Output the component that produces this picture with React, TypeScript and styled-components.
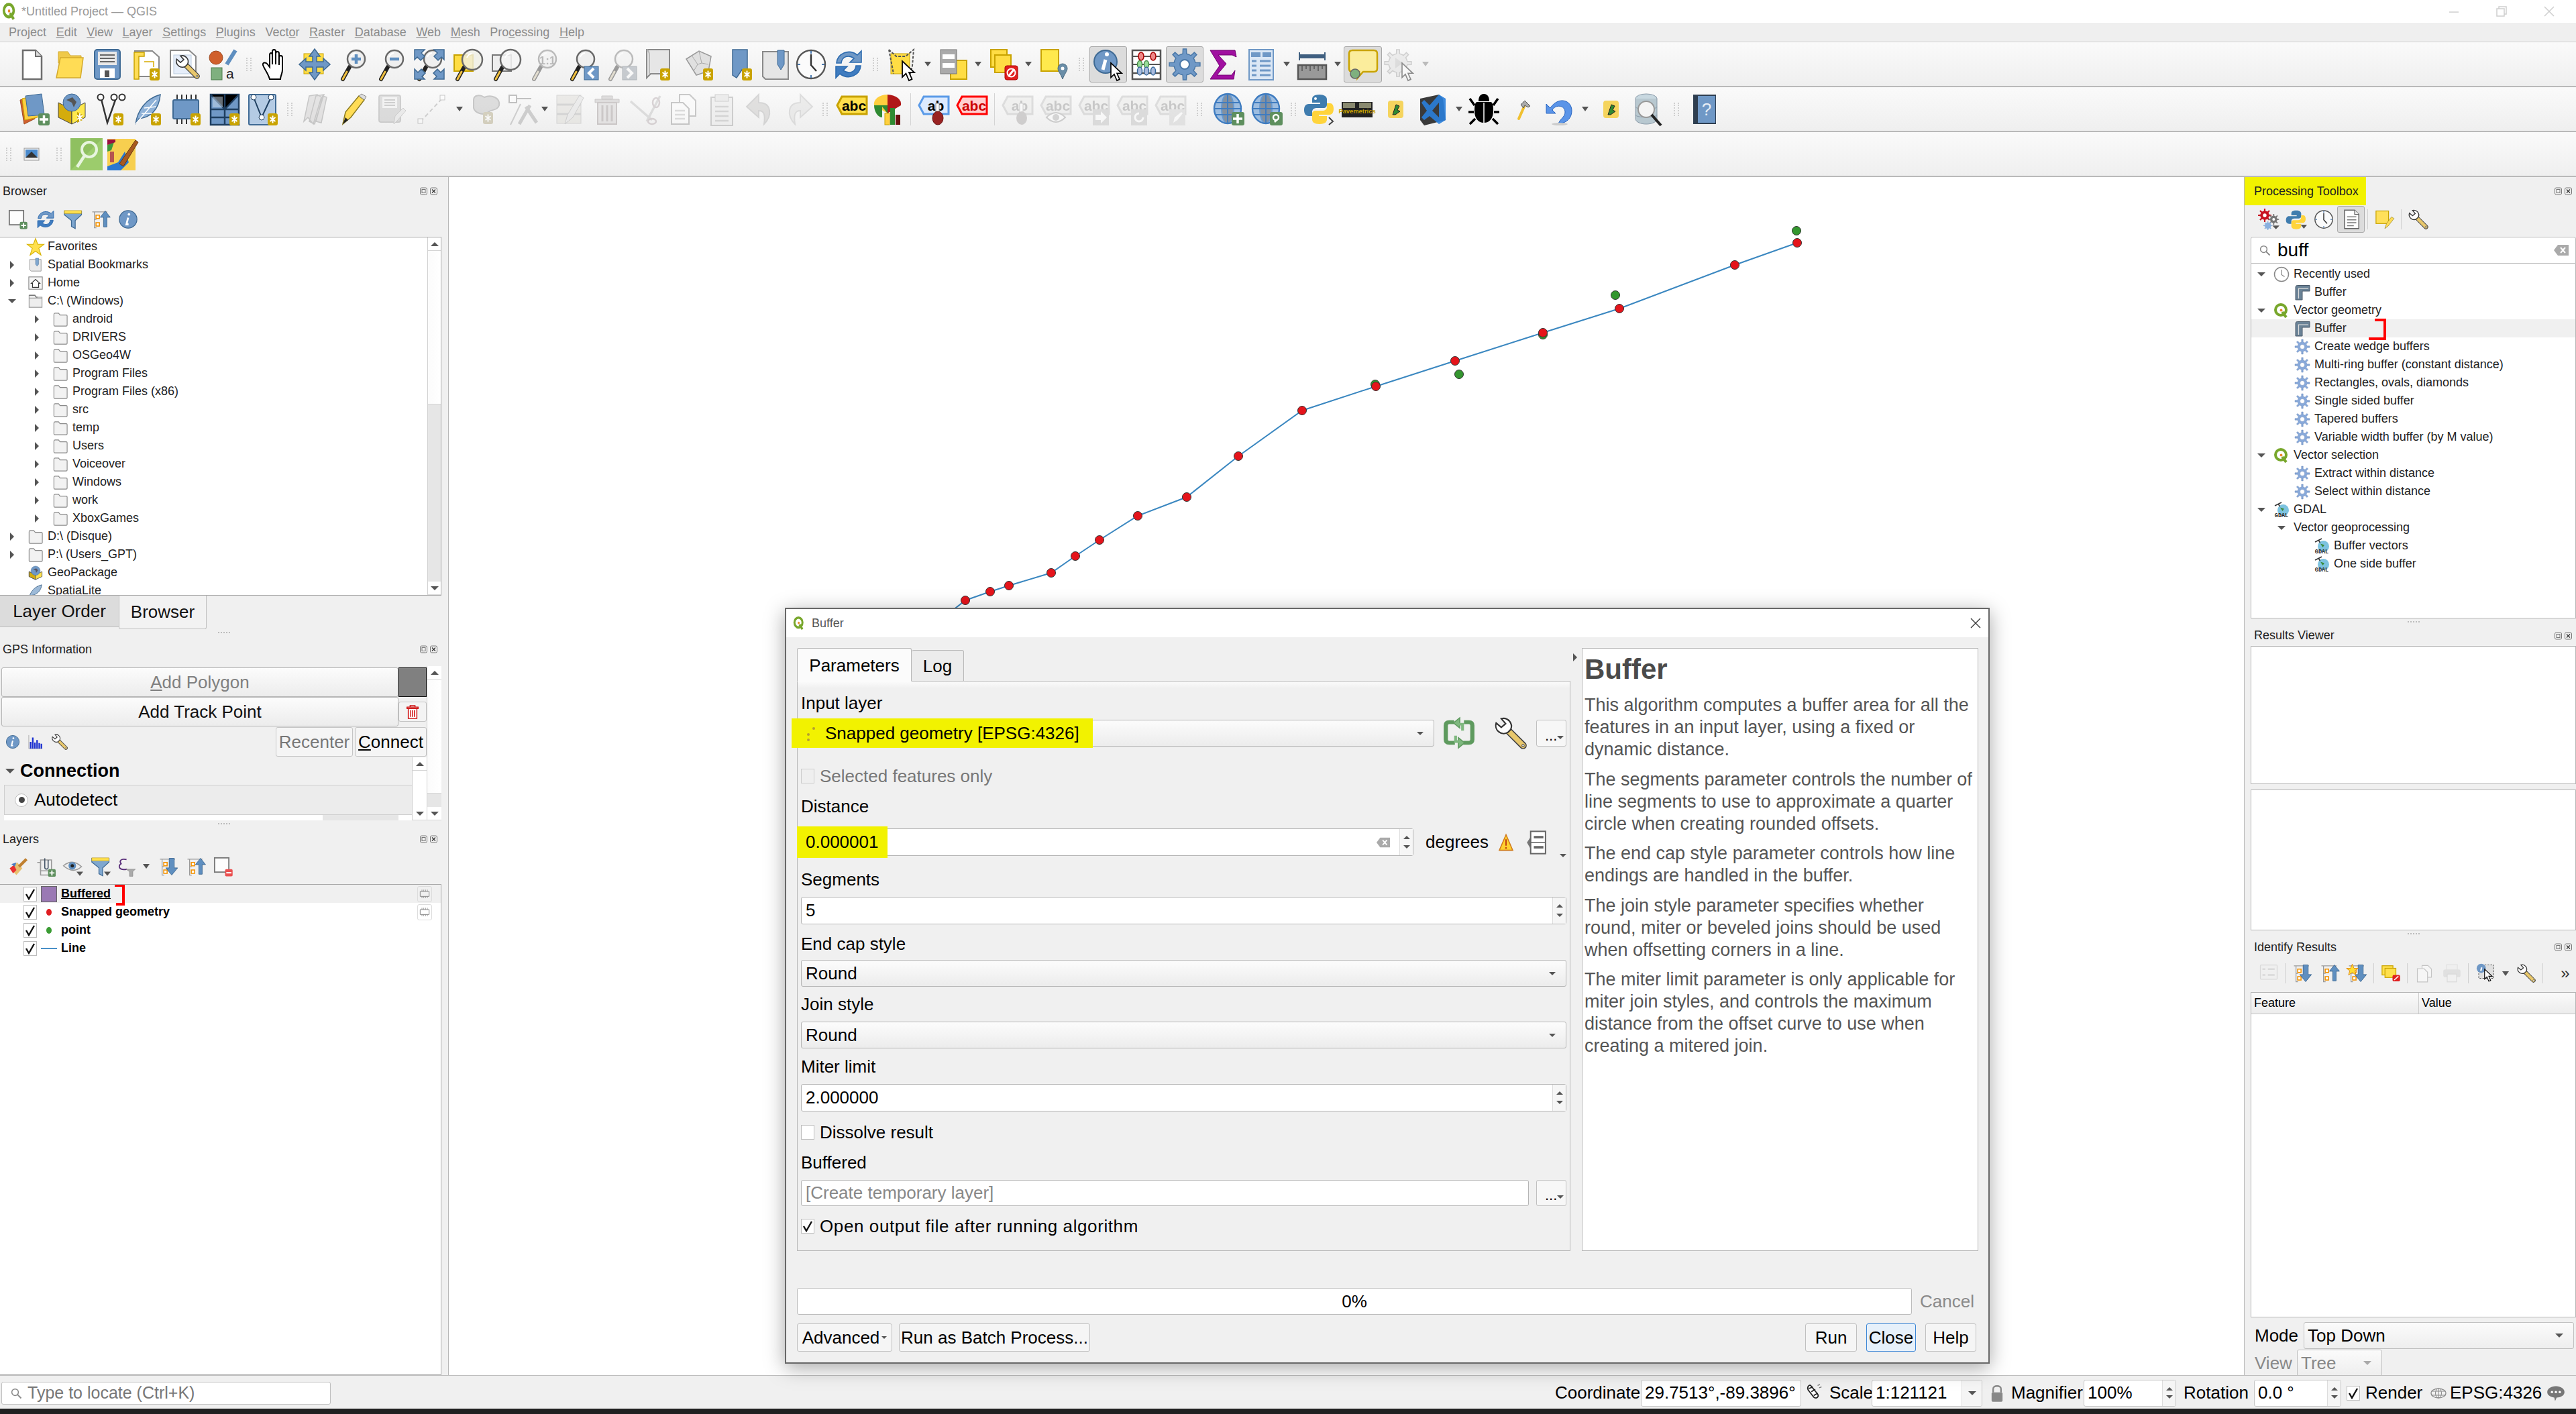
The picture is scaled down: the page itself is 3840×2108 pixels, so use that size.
import React from 'react';
import styled, { createGlobalStyle } from 'styled-components';

const Global = createGlobalStyle`
  html, body { margin: 0; padding: 0; background: #f0f0f0; overflow: hidden; }
  * { box-sizing: border-box; }
  body { font-family: "Liberation Sans", Arial, sans-serif; color: #000; }
`;

const gear = (cx: number, cy: number, r1: number, r2: number, n: number) => {
  let d = '';
  const st = (Math.PI * 2) / n;
  for (let i = 0; i < n; i++) {
    const a = i * st;
    const pts = [
      [a - st * 0.5, r1], [a - st * 0.22, r1], [a - st * 0.14, r2], [a + st * 0.14, r2], [a + st * 0.22, r1],
    ];
    pts.forEach(([t, r], j) => {
      d += `${i === 0 && j === 0 ? 'M' : 'L'}${(cx + Math.cos(t) * r).toFixed(1)} ${(cy + Math.sin(t) * r).toFixed(1)}`;
    });
  }
  return d + 'Z';
};

const Badge = ({ x = 31, y = 30 }: { x?: number; y?: number }) => (
  <g transform={`translate(${x} ${y})`}>
    <rect width="15" height="18" rx="3" fill="#c9a300" />
    <path d="M7.5 3.5v11M3.5 6l8 6M11.5 6l-8 6" stroke="#fff" strokeWidth="2" />
  </g>
);
const Lens = ({ fill = '#efefef', x = 29, y = 16, r = 13 }: { fill?: string; x?: number; y?: number; r?: number }) => (
  <>
    <path d="M9 46L19 28" stroke="#222" strokeWidth="6" strokeLinecap="round" />
    <path d="M9 46L15 35" stroke="#f0c040" strokeWidth="3" strokeLinecap="round" />
    <circle cx={x} cy={y} r={r} fill={fill} stroke="#6a6a6a" strokeWidth="2.5" />
    <path d={`M${x - 8} ${y - 3}a9 9 0 0 1 7 -6`} stroke="#fff" strokeWidth="2" fill="none" />
  </>
);
const Wrench = () => (
  <>
    <path d="M18 18L41 41" stroke="#444" strokeWidth="10" strokeLinecap="round" />
    <path d="M18 18L41 41" stroke="#e8c76c" strokeWidth="7" strokeLinecap="round" />
    <circle cx="41" cy="41" r="1.6" fill="#fff" stroke="#444" />
    <path d="M4 10a11 11 0 0 0 16 13l4-4a11 11 0 0 0-13-15l6 7-6 5z" fill="#fff" stroke="#333" strokeWidth="2" />
  </>
);
const Cursor = ({ x, y, s = 1 }: { x: number; y: number; s?: number }) => (
  <path transform={`translate(${x} ${y}) scale(${s})`} d="M0 0V24L5.5 18.5 10 29l4.5-2-4.5-10H18Z" fill="#fff" stroke="#000" strokeWidth="1.8" />
);
const Page = ({ x = 8, w = 28, y = 3, h = 42 }: { x?: number; w?: number; y?: number; h?: number }) => (
  <path d={`M${x} ${y}h${w - 9}l9 9V${y + h}H${x}Z`} fill="#fff" stroke="#8a8a8a" strokeWidth="2" />
);
const TreeArrow = ({ up }: { up?: boolean }) => (
  <>
    <path d="M4 6H40M9 6V44H14M9 24H14" stroke="#9a9a9a" strokeWidth="2" fill="none" />
    <rect x="13" y="14" width="8" height="8" fill="#fff" stroke="#f39200" strokeWidth="2.5" />
    <rect x="13" y="32" width="8" height="8" fill="#fff" stroke="#f39200" strokeWidth="2.5" />
    {up ? (
      <path d="M31 42V19H23L35 4 47 19H39V42Z" fill="#5f8fc0" stroke="#3f6a94" strokeWidth="1.5" />
    ) : (
      <path d="M26 4H38V27H46L32 44 18 27H26Z" fill="#5f8fc0" stroke="#3f6a94" strokeWidth="1.5" />
    )}
  </>
);
const Filter = () => (
  <>
    <path d="M3 4H44V13L29 27V46L20 41V27L3 13Z" fill="#7fa7cf" stroke="#3f6a94" strokeWidth="2" />
    <rect x="3" y="3" width="41" height="7" fill="#ffe04d" stroke="#b89a20" />
  </>
);
const Refresh = () => (
  <>
    <path d="M6 22C7 8 24 0 37 10L43 4V21H26L32 15C24 9 14 12 13 22Z" fill="#6f98c6" stroke="#2e6cb0" strokeWidth="1.6" />
    <path d="M42 26C41 40 24 48 11 38L5 44V27H22L16 33C24 39 34 36 35 26Z" fill="#3f7cc0" stroke="#2e6cb0" strokeWidth="1.6" />
  </>
);
const Info = () => (
  <>
    <circle cx="24" cy="24" r="21" fill="#6f98c6" stroke="#3f6a94" strokeWidth="2" />
    <path d="M24 20L20 36h5" stroke="#fff" strokeWidth="4.5" fill="none" />
    <circle cx="26" cy="12" r="3" fill="#fff" />
  </>
);
const Globe = ({ children }: { children?: React.ReactNode }) => (
  <>
    <ellipse cx="22" cy="23" rx="20" ry="22" fill="#9dbde0" stroke="#3f7cc0" strokeWidth="2.4" />
    <ellipse cx="22" cy="23" rx="9" ry="22" fill="#6d6d6d" opacity=".55" stroke="#3f7cc0" strokeWidth="2" />
    <path d="M3 14H41M2 23H42M3 32H41M22 1V45" stroke="#3f7cc0" strokeWidth="2" />
    {children}
  </>
);
const Abc = ({ t = 'abc', c = '#c8a200', fill = '#ffe04d', fg = '#000' }: { t?: string; c?: string; fill?: string; fg?: string }) => (
  <>
    <path d="M9 5H46V31H9L2 18Z" fill={fill} stroke={c} strokeWidth="3" />
    <text x="27" y="26" fontSize="21" fontWeight="700" fontFamily="Liberation Sans" textAnchor="middle" fill={fg}>{t}</text>
  </>
);
const Logo = () => (
  <>
    <circle cx="22" cy="22" r="16" fill="none" stroke="#78a72c" strokeWidth="8" />
    <path d="M26 28L38 44" stroke="#78a72c" strokeWidth="8" />
    <circle cx="23" cy="23" r="4" fill="#e98a2c" />
  </>
);
const Gdal = () => (
  <>
    <circle cx="29" cy="25" r="17" fill="#7dc3e0" />
    <path d="M20 17l12 4-5 7z" fill="#3a8a3a" />
    <path d="M4 12L24 2M14 6l5 8" stroke="#333" strokeWidth="3" />
    <text x="24" y="45" fontSize="17" fontWeight="700" fontFamily="Liberation Mono" textAnchor="middle" fill="#222">GDAL</text>
  </>
);
const Plugin = () => (
  <>
    <rect x="13" y="11" width="23" height="26" rx="4" fill="#f5d45e" />
    <path d="M20 32L25 17 30 19 27 25 31 27 24 32Z" fill="#2f8a32" stroke="#222" strokeWidth="1" />
  </>
);

const ICONS: Record<string, React.ReactNode> = {
  new: (<><path d="M12 3H31L40 12V46H12Z" fill="#fff" stroke="#6e6e6e" strokeWidth="2.5" /><path d="M31 3V12H40" fill="#ddd" stroke="#6e6e6e" strokeWidth="2" /></>),
  open: (<><path d="M8 5H22L26 11H42V22H8Z" fill="#efc94a" stroke="#d3a92c" /><path d="M11 14H45L41 44H5Z" fill="#ffdc55" stroke="#d3a92c" strokeWidth="1.5" /></>),
  save: (<><rect x="5" y="2" width="38" height="44" rx="4" fill="#6f98c6" stroke="#3f6a94" strokeWidth="2" /><rect x="10" y="5" width="28" height="20" fill="#e8e8e8" /><path d="M13 10h22M13 15h22M13 20h22" stroke="#666" strokeWidth="2" /><rect x="13" y="30" width="22" height="14" fill="#fff" /><rect x="20" y="33" width="7" height="10" fill="#555" /></>),
  saveAs: (<><path d="M8 4H34L44 13V42H8Z" fill="#fff" stroke="#8a8a8a" strokeWidth="2" /><path d="M7 6H22V12H14V46H7Z" fill="#ffdc55" stroke="#c9a300" strokeWidth="1.5" /><path d="M22 20H36V28" fill="none" stroke="#e0c040" strokeWidth="2" /><Badge x={30} y={30} /></>),
  props: (<><path d="M4 3H32L42 12V43H4Z" fill="#fff" stroke="#8a8a8a" strokeWidth="2" /><rect x="9" y="10" width="26" height="28" fill="#e6eefa" stroke="#bcd" /><g transform="translate(10 8) scale(.82)"><Wrench /></g></>),
  style: (<><circle cx="15" cy="14" r="10" fill="#d0602c" stroke="#9e4a20" /><path d="M31 24L44 3" stroke="#5f8fc0" strokeWidth="6" /><rect x="8" y="29" width="16" height="18" fill="#7fb07f" stroke="#4a7a4a" /><text x="30" y="45" fontSize="21" fontFamily="Liberation Sans" fill="#222">a</text></>),
  hand: (<path d="M14 46C12 38 6 31 4 25 3 21 8 20 11 24L14 28V10C14 6 18 6 18 10V24 5C18 1 23 1 23 5V24 8C23 4 28 4 28 8V25 14C28 10 33 10 33 14V32C33 38 30 41 30 46Z" fill="#fff" stroke="#000" strokeWidth="2" />),
  pan: (<><rect x="8" y="8" width="29" height="30" fill="#ffdd44" stroke="#c9a300" /><path d="M24 1L32 12H27V20H37V15L47 24 37 33V28H27V36H32L24 47 16 36H21V28H11V33L1 24 11 15V20H21V12H16Z" fill="#6f98c6" stroke="#3f6a94" strokeWidth="1.5" /></>),
  zin: (<><Lens /><path d="M29 9V23M22 16H36" stroke="#5f8fc0" strokeWidth="4.5" /></>),
  zout: (<><Lens /><path d="M22 16H36" stroke="#5f8fc0" strokeWidth="4.5" /></>),
  zfull: (<><Lens /><path d="M2 2H17L12 7 17 12 11 18 6 13 2 17ZM46 2H31L36 7 31 12 37 18 42 13 46 17ZM2 46V31L7 36 12 31 18 37 13 42 17 46ZM46 46V31L41 36 36 31 30 37 35 42 31 46Z" fill="#6f98c6" stroke="#3f6a94" strokeWidth="1.5" /></>),
  zsel: (<><rect x="4" y="10" width="28" height="24" fill="#ffdd44" stroke="#c9a300" strokeWidth="2" /><Lens fill="rgba(240,240,230,.8)" x={31} y={17} r={15} /></>),
  zlayer: (<><rect x="4" y="10" width="28" height="24" fill="#eee" stroke="#777" strokeWidth="2" /><Lens fill="rgba(245,245,245,.85)" x={31} y={17} r={15} /></>),
  z11: (<><Lens /><text x="29" y="24" fontSize="17" textAnchor="middle" fontWeight="700" fontFamily="Liberation Sans" fill="#666">1:1</text></>),
  zlast: (<><Lens /><rect x="27" y="27" width="21" height="20" fill="#6f98c6" stroke="#3f6a94" /><path d="M41 30L34 37 41 44" stroke="#fff" strokeWidth="4" fill="none" /></>),
  znext: (<><Lens /><rect x="27" y="27" width="21" height="20" fill="#6f98c6" stroke="#3f6a94" /><path d="M34 30L41 37 34 44" stroke="#fff" strokeWidth="4" fill="none" /></>),
  map: (<><path d="M6 2H40V38H12L6 44Z" fill="#e6e6e6" stroke="#8a8a8a" strokeWidth="2" /><path d="M6 2C10 4 10 8 10 10V38" stroke="#bbb" strokeWidth="2" fill="none" /><Badge x={26} y={30} /></>),
  map3d: (<><path d="M3 16L22 4 40 12 36 34 18 40Z" fill="#e0e0e0" stroke="#999" strokeWidth="1.5" /><path d="M12 12L20 24 14 34M22 4L26 22 36 24M20 24L26 22" stroke="#aaa" fill="none" /><Badge x={28} y={30} /></>),
  bmNew: (<><path d="M10 2H32V40L24 32 16 44 10 40Z" fill="#6f98c6" stroke="#3f6a94" strokeWidth="1.5" /><Badge x={24} y={30} /></>),
  bm: (<><path d="M4 5H42V46H8L4 42Z" fill="#e6e6e6" stroke="#8a8a8a" strokeWidth="2" /><path d="M26 3H36V24L31 32 26 24Z" fill="#6f98c6" stroke="#3f6a94" /></>),
  clock: (<><circle cx="24" cy="24" r="21" fill="#fbfbfb" stroke="#555" strokeWidth="2.4" /><path d="M24 9V25L32 34" stroke="#333" strokeWidth="2.4" fill="none" /><path d="M24 4v4M24 40v4M4 24h4M40 24h4" stroke="#4a7ab0" strokeWidth="2" /></>),
  refresh: <Refresh />,
  select: (<><rect x="6" y="8" width="28" height="30" fill="#ffdd44" stroke="#c9a300" /><path d="M3 2L14 12H28L40 2 38 26 34 42M3 2L10 38" stroke="#555" strokeWidth="2" strokeDasharray="4 2" fill="none" /><Cursor x={23} y={19} s={1} /></>),
  attrsel: (<><rect x="20" y="18" width="24" height="28" fill="#ffdd44" stroke="#c9a300" strokeWidth="2" /><rect x="5" y="2" width="24" height="36" fill="#aaa" stroke="#777" /><rect x="8" y="9" width="18" height="7" fill="#fff" /><rect x="8" y="22" width="18" height="7" fill="#fff" /></>),
  desel: (<><rect x="5" y="2" width="24" height="26" fill="#ffdd44" stroke="#c9a300" strokeWidth="2" /><rect x="11" y="10" width="24" height="26" fill="#ffdd44" stroke="#c9a300" strokeWidth="2" /><rect x="26" y="26" width="19" height="21" rx="3" fill="#e01f1f" stroke="#a00" /><path d="M31 42L40 31" stroke="#fff" strokeWidth="3" /><circle cx="35.5" cy="36.5" r="6" fill="none" stroke="#fff" strokeWidth="2" /></>),
  selLoc: (<><rect x="5" y="2" width="26" height="32" fill="#ffe94d" stroke="#c9a300" strokeWidth="2" /><path d="M37 46C34 38 30 34 30 30A7 7 0 0 1 44 30C44 34 40 38 37 46Z" fill="#6a8ea8" stroke="#4a6a80" /><circle cx="37" cy="30" r="2.5" fill="#fff" /></>),
  identify: (<><circle cx="20" cy="20" r="17" fill="#6f98c6" stroke="#3f6a94" strokeWidth="2" /><path d="M20 17L16 32" stroke="#fff" strokeWidth="5" /><circle cx="22" cy="9" r="3" fill="#fff" /><Cursor x={28} y={22} s={.9} /></>),
  abacus: (<><rect x="3" y="3" width="42" height="43" fill="#fff" /><path d="M3 3H45V46H3ZM3 37H45" fill="none" stroke="#555" strokeWidth="2.5" /><path d="M3 12H45M3 24H45" stroke="#555" strokeWidth="2" /><ellipse cx="16" cy="12" rx="4" ry="6" fill="#e88" stroke="#a00" strokeWidth="1.5" /><ellipse cx="34" cy="12" rx="4" ry="6" fill="#e88" stroke="#a00" strokeWidth="1.5" /><ellipse cx="14" cy="24" rx="3.5" ry="5.5" fill="#9d9" stroke="#484" strokeWidth="1.5" /><ellipse cx="24" cy="24" rx="3.5" ry="5.5" fill="#9d9" stroke="#484" strokeWidth="1.5" /><ellipse cx="14" cy="34" rx="3.5" ry="6" fill="#abd" stroke="#369" strokeWidth="1.5" /><ellipse cx="24" cy="34" rx="3.5" ry="6" fill="#abd" stroke="#369" strokeWidth="1.5" /><ellipse cx="34" cy="34" rx="3.5" ry="6" fill="#abd" stroke="#369" strokeWidth="1.5" /></>),
  gear: (<><path d={gear(24, 24, 16, 23, 8)} fill="#6f98c6" stroke="#4a78a8" strokeWidth="1.5" /><circle cx="24" cy="24" r="7" fill="#fff" stroke="#4a78a8" strokeWidth="2" /></>),
  sigma: (<path d="M5 3H42L44 13 38 10H17L29 23 15 40H37L42 33 40 46H5L19 26Z" fill="#a010a0" stroke="#700070" />),
  table: (<><rect x="6" y="2" width="36" height="45" fill="#dbe7f5" stroke="#6f98c6" strokeWidth="2" /><rect x="9" y="6" width="14" height="7" fill="#6f98c6" /><rect x="26" y="6" width="13" height="7" fill="#6f98c6" /><path d="M10 19H17M22 19H38M10 26H17M22 26H38M10 33H17M22 33H38M10 40H17M22 40H38" stroke="#6f98c6" strokeWidth="3" /></>),
  measure: (<><path d="M5 6V18M43 6V18" stroke="#3f5f80" strokeWidth="2" /><rect x="5" y="9" width="38" height="6" fill="#3f5f80" /><rect x="3" y="25" width="42" height="21" fill="#999" stroke="#555" strokeWidth="2.5" /><path d="M9 26v8M15 26v5M21 26v8M27 26v5M33 26v8M39 26v5" stroke="#333" /></>),
  tips: (<><path d="M8 3H40Q45 3 45 8V30Q45 35 40 35H24L16 44 18 35H8Q3 35 3 30V8Q3 3 8 3Z" fill="#fbed9c" stroke="#c9a300" strokeWidth="2.5" /><circle cx="12" cy="38" r="7" fill="#7fb07f" stroke="#666" strokeWidth="1.5" /></>),
  gearPlay: (<><path d={gear(20, 22, 14, 20, 8)} fill="#ddd" stroke="#999" strokeWidth="1.5" /><path d="M16 14L27 22 16 30Z" fill="#bbb" /><Cursor x={26} y={22} s={.9} /></>),
  dataSrc: (<><path d="M4 10L22 6 26 38 10 46Z" fill="#d0602c" stroke="#9e4a20" /><path d="M7 8L26 4 30 36 11 40Z" fill="#ffcf3f" stroke="#c9a300" /><path d="M12 4L36 1 40 32 16 34Z" fill="#6f98c6" stroke="#3f6a94" /><rect x="31" y="30" width="17" height="18" rx="3" fill="#5e8f5e" /><path d="M39.5 33V45M33 39H46" stroke="#fff" strokeWidth="3.5" /></>),
  gpkg: (<><path d="M4 14L24 24V46L4 36Z" fill="#d4ac0d" stroke="#444" /><path d="M24 24L44 14V36L24 46Z" fill="#ffe94d" stroke="#444" /><circle cx="24" cy="14" r="13" fill="#6f98c6" stroke="#3f6a94" /><path d="M16 10l8 4 3 7 4-8-6-7z" fill="#555" /><path d="M32 28l8 4v8l-8 4z" fill="#c9a300" /><path d="M36 30v12M32 33l8 6M40 33l-8 6" stroke="#fff" strokeWidth="2" /></>),
  shp: (<><path d="M11 9L20 44 32 10" fill="none" stroke="#333" strokeWidth="2.5" /><circle cx="10" cy="6" r="4.5" fill="#fff" stroke="#333" strokeWidth="2" /><circle cx="30" cy="6" r="4.5" fill="#fff" stroke="#333" strokeWidth="2" /><circle cx="42" cy="6" r="4.5" fill="#fff" stroke="#333" strokeWidth="2" /><Badge x={29} y={30} /></>),
  feather: (<><path d="M5 46C8 26 20 8 42 2 40 24 28 36 10 38Z" fill="#8fb2d8" stroke="#3f6a94" strokeWidth="1.5" /><path d="M5 46L36 10M14 30L30 30M18 22L36 20" stroke="#fff" strokeWidth="1.5" /><Badge x={28} y={30} /></>),
  chip: (<><path d="M10 2V46M17 2V46M24 2V46M31 2V46M38 2V46" stroke="#333" strokeWidth="2" /><rect x="4" y="10" width="38" height="28" rx="2" fill="#6f98c6" stroke="#3f6a94" strokeWidth="2" /><Badge x={30} y={30} /></>),
  mesh: (<><rect x="3" y="2" width="42" height="45" fill="#6f98c6" stroke="#1f3f60" strokeWidth="2.5" /><path d="M3 24H45M24 2V47M3 2L24 24 45 2M3 36H45" stroke="#1f3f60" strokeWidth="2.5" /><rect x="6" y="5" width="15" height="16" fill="#cde" opacity=".5" /><Badge x={31} y={30} /></>),
  vnew: (<><rect x="3" y="2" width="40" height="45" rx="2" fill="#b4cbe4" stroke="#3f6a94" strokeWidth="2" /><path d="M10 6L22 36 36 6" fill="none" stroke="#1f3f60" strokeWidth="2" /><circle cx="10" cy="6" r="4" fill="#fff" stroke="#1f3f60" /><circle cx="36" cy="6" r="4" fill="#fff" stroke="#1f3f60" /><circle cx="22" cy="36" r="4" fill="#fff" stroke="#1f3f60" /><Badge x={31} y={30} /></>),
  pencils: (<path d="M6 42L14 4 26 2 32 6 20 46 12 36ZM14 42L24 4 36 2 34 8 22 46ZM24 42L34 4 40 6 32 44Z" fill="#d0c8c8" stroke="#888" strokeWidth="1.5" />),
  pencil: (<><path d="M8 46L12 28 32 4 40 10 20 36Z" fill="#ffdc55" stroke="#8a7a20" strokeWidth="1.5" /><path d="M32 4L40 10 43 5 36 1Z" fill="#ddd" stroke="#888" /><path d="M8 46L12 36 16 40Z" fill="#222" /></>),
  saveEdit: (<><rect x="4" y="3" width="32" height="40" rx="3" fill="#bbb" stroke="#999" strokeWidth="2" /><rect x="9" y="6" width="22" height="16" fill="#eee" /><path d="M12 10h16M12 14h16M12 18h16" stroke="#999" strokeWidth="2" /><path d="M26 46L28 34 40 22 44 26 32 40Z" fill="#ddd" stroke="#999" /></>),
  addLine: (<><path d="M8 42L40 8" stroke="#999" strokeWidth="2" strokeDasharray="6 4" /><rect x="4" y="38" width="7" height="7" fill="#fff" stroke="#888" /><rect x="37" y="3" width="7" height="7" fill="#fff" stroke="#888" /></>),
  addFeat: (<><path d="M4 10C4 2 14 2 20 6 30 2 44 6 42 18 40 26 30 24 26 28 20 34 6 30 4 22Z" fill="#bbb" stroke="#888" strokeWidth="2" /><Badge x={18} y={28} /></>),
  vertex: (<><path d="M3 3H14V14H3ZM14 8H36" stroke="#777" strokeWidth="2" fill="#fff" /><path d="M5 47L20 16" stroke="#999" strokeWidth="2" /><path d="M34 18L18 46M28 20L44 44" stroke="#999" strokeWidth="5" /></>),
  editTable: (<><rect x="6" y="3" width="36" height="42" fill="#e0d8c0" stroke="#aaa" /><path d="M6 17H42M6 31H42" stroke="#aaa" strokeWidth="3" /><path d="M18 46L22 32 40 3 46 7 30 36Z" fill="#ddd" stroke="#999" /></>),
  trash: (<><path d="M16 4H32V9H16ZM6 9H42V14H6Z" fill="#c8b8b8" stroke="#988" /><path d="M10 14H38V46H10Z" fill="#d8cccc" stroke="#a88" strokeWidth="2" /><path d="M17 18V42M24 18V42M31 18V42" stroke="#a88" strokeWidth="3" /></>),
  cut: (<><path d="M2 12L34 40M46 4L26 42" stroke="#bbb" strokeWidth="3.5" /><ellipse cx="34" cy="42" rx="6" ry="4" fill="none" stroke="#c9a" strokeWidth="2.5" /><ellipse cx="40" cy="14" rx="5" ry="7" fill="none" stroke="#c9a" strokeWidth="2.5" /></>),
  copy: (<><Page x={18} w={24} y={2} h={32} /><Page x={6} w={26} y={14} h={32} /><path d="M11 26H26M11 32H26M11 38H26" stroke="#bbb" strokeWidth="2.5" /></>),
  paste: (<><rect x="8" y="6" width="32" height="42" fill="#e8e8e8" stroke="#999" strokeWidth="2" /><rect x="14" y="2" width="20" height="10" fill="#ddd" stroke="#999" /><path d="M14 20H34M14 27H34M14 34H34M14 41H34" stroke="#aaa" strokeWidth="2.5" /></>),
  undo: (<path d="M22 2L4 20 22 36V26C30 26 32 32 30 46 42 34 42 14 22 14Z" fill="#c8c0b8" stroke="#aaa" strokeWidth="2" />),
  redo: (<path d="M26 2L44 20 26 36V26C18 26 16 32 18 46 6 34 6 14 26 14Z" fill="#dcdcd8" stroke="#bbb" strokeWidth="2" />),
  abc: <Abc />,
  chart: (<><path d="M22 2A21 14 0 0 1 42 18L22 30Z" fill="#b01818" /><path d="M22 2A20 14 0 0 0 2 18L22 30Z" fill="#ffcf3f" /><path d="M2 18C2 28 8 36 14 36V20L22 30V18Z" fill="#2f8a32" /><rect x="18" y="30" width="7" height="17" fill="#ffcf3f" stroke="#c9a300" /><rect x="26" y="22" width="7" height="25" fill="#2f8a32" /><rect x="34" y="32" width="7" height="15" fill="#6a1010" /></>),
  abPin: (<><Abc t="ab" c="#5b9be8" fill="#dceaff" /><rect x="27" y="15" width="5" height="16" fill="#fff" stroke="#888" /><ellipse cx="30" cy="37" rx="8" ry="10" fill="#922" stroke="#611" /></>),
  abcRed: (<Abc c="#f00" fill="#ffcfcf" fg="#c00" />),
  abDis: (<><Abc t="ab" c="#bbb" fill="#e8e8e0" fg="#888" /><rect x="27" y="15" width="5" height="16" fill="#fff" stroke="#999" /><ellipse cx="30" cy="37" rx="8" ry="10" fill="#a99" /></>),
  abcEye: (<><Abc c="#bbb" fill="#e8e8e0" fg="#888" /><path d="M10 36Q24 22 38 36 24 50 10 36Z" fill="#fff" stroke="#999" strokeWidth="2" /><circle cx="24" cy="36" r="5" fill="#aaa" /></>),
  abcMove: (<><Abc c="#bbb" fill="#e8e8e0" fg="#888" /><rect x="22" y="24" width="24" height="24" fill="#bbb" /><path d="M26 32H34V27L43 36 34 45V40H26Z" fill="#fff" /></>),
  abcRot: (<><Abc c="#bbb" fill="#e8e8e0" fg="#888" /><rect x="22" y="24" width="24" height="24" fill="#bbb" /><path d="M40 36A6 6 0 1 1 34 30" stroke="#fff" strokeWidth="3" fill="none" /></>),
  abcEdit: (<><Abc c="#bbb" fill="#e8e8e0" fg="#888" /><rect x="22" y="24" width="24" height="24" fill="#ccc" /><path d="M28 44L30 36 40 28 42 30 34 40Z" fill="#fff" /></>),
  globeAdd: (<Globe><rect x="28" y="28" width="19" height="20" rx="3" fill="#5e8f5e" /><path d="M37 31V45M30 38H44" stroke="#fff" strokeWidth="3.5" /></Globe>),
  globeFind: (<Globe><rect x="28" y="28" width="19" height="20" rx="3" fill="#5e8f5e" /><circle cx="37" cy="36" r="4" fill="none" stroke="#fff" strokeWidth="2.5" /><path d="M35 43L38 40" stroke="#fff" strokeWidth="2.5" /></Globe>),
  python: (<><path d="M24 2C14 2 13 6 13 9V14H25V16H8C3 16 1 20 1 25 1 31 4 34 8 34H13V28C13 24 16 22 20 22H30C33 22 35 20 35 17V9C35 5 31 2 24 2Z" fill="#3f7cae" /><circle cx="18" cy="8" r="2" fill="#fff" /><path d="M24 46C33 46 35 42 35 39V34H23V32H39C43 32 45 28 45 23 45 18 43 15 40 15H35V20C35 24 32 26 28 26H18C15 26 13 28 13 31V39C13 43 16 46 24 46Z" fill="#ffd43b" /><path d="M38 36L44 42 38 47" stroke="#444" strokeWidth="2" fill="none" /></>),
  pave: (<><rect x="1" y="13" width="46" height="23" fill="#222" /><rect x="3" y="14" width="18" height="8" fill="#8a8a70" /><rect x="27" y="14" width="18" height="8" fill="#8a8a70" /><text x="24" y="30" fontSize="9.4" fontWeight="700" fontFamily="Liberation Sans" textAnchor="middle" fill="#c9a300">Pavemetrics</text></>),
  plugin: <Plugin />,
  vscode: (<><path d="M4 8L32 2 38 8 42 40 10 48 4 40Z" fill="#3a3a3a" /><path d="M32 2L42 8V40L32 46 18 34 10 40 6 36 14 26 6 14 10 10 18 18Z" fill="#2a7fdc" opacity=".9" /><path d="M22 26L32 14V36Z" fill="#3a3a3a" /></>),
  bug: (<><path d="M24 1C18 1 16 6 16 12H32C32 6 30 1 24 1Z" fill="#000" /><path d="M14 13H34C37 13 38 18 38 26 38 38 32 44 24 44 16 44 10 38 10 26 10 18 11 13 14 13Z" fill="#000" /><path d="M24 14V44" stroke="#fff" strokeWidth="1.5" /><path d="M10 18L3 8M38 18L45 8M9 28H1M39 28H47M11 38L3 46M37 38L45 46" stroke="#000" strokeWidth="3.5" /></>),
  hammer: (<><path d="M27 20L19 38" stroke="#f0c030" strokeWidth="4" strokeLinecap="round" /><path d="M22 17L28 11 36 19 33 21 28 18 26 22Z" fill="#aaa" stroke="#555" /></>),
  reload: (<><path d="M10 22L4 16 4 30 18 30 13 25C18 16 32 18 32 28 32 36 24 38 22 46 36 44 42 36 42 26 42 10 22 4 10 22Z" fill="#5a94e8" stroke="#2a66c0" /><ellipse cx="24" cy="46" rx="12" ry="2" fill="#ccc" /></>),
  dbFind: (<><ellipse cx="20" cy="8" rx="16" ry="7" fill="#c8d8e0" stroke="#8a9aa8" /><path d="M4 8V38C4 43 12 46 20 46 28 46 36 43 36 38V8" fill="#b8c8d0" stroke="#8a9aa8" /><path d="M4 20C4 25 36 25 36 20M4 32C4 37 36 37 36 32" stroke="#8a9aa8" fill="none" /><circle cx="20" cy="24" r="12" fill="#f4f4f4" stroke="#999" strokeWidth="2" /><path d="M28 32L42 48" stroke="#222" strokeWidth="4" /></>),
  help: (<><rect x="7" y="2" width="34" height="44" fill="#2e3e50" /><rect x="14" y="4" width="26" height="40" fill="#6f98c6" /><text x="27" y="33" fontSize="26" fontFamily="Liberation Sans" textAnchor="middle" fill="#e8eef5">?</text></>),
  pic: (<><rect x="13" y="15" width="22" height="18" fill="#eee" stroke="#999" /><rect x="15" y="17" width="18" height="12" fill="#4a8acc" /><path d="M15 29L24 20 33 29Z" fill="#333" /></>),
  qSearch: (<><rect x="0" y="0" width="48" height="48" fill="#8fc060" /><path d="M0 48L48 0V48Z" fill="#9ccc6c" /><circle cx="28" cy="17" r="11" fill="none" stroke="#e8f5df" strokeWidth="4" /><path d="M21 26L10 43" stroke="#e8f5df" strokeWidth="4.5" /></>),
  mapBrush: (<><rect x="2" y="1" width="42" height="47" fill="#f7cf4f" /><path d="M2 10L12 6 8 18 2 20Z" fill="#3c9a3c" /><path d="M2 2H14V6L2 10Z" fill="#9a1040" /><path d="M6 20H12V36H6Z" fill="#9a2050" opacity=".7" /><path d="M34 36L22 48H2V42L18 36 28 20Z" fill="#2a78d0" /><path d="M20 38L44 3 48 6 26 42Z" fill="#a85a20" stroke="#6a3a10" /></>),
  newConn: (<><rect x="3" y="3" width="34" height="34" fill="#fdfdfd" stroke="#7a7a7a" strokeWidth="3" /><rect x="28" y="30" width="18" height="17" rx="3" fill="#5e8f5e" /><path d="M37 33V44M31 38.5H43" stroke="#fff" strokeWidth="3" /></>),
  collapse: <TreeArrow up />,
  expand: <TreeArrow />,
  filter: <Filter />,
  info: <Info />,
  brush: (<><path d="M4 28L22 14 34 28 20 44Z" fill="#e8c070" /><path d="M4 28L14 20 20 32 12 40Z" fill="#e83030" /><path d="M8 18L20 14 16 24Z" fill="#4a7ac0" /><path d="M26 24L44 6" stroke="#c08030" strokeWidth="7" /></>),
  addGroup: (<><path d="M4 14H12V44H36" fill="none" stroke="#999" strokeWidth="2.5" /><path d="M12 8H38V34H12Z" fill="#eee" stroke="#999" strokeWidth="2.5" /><path d="M22 4V26C22 31 30 31 30 26V8" fill="none" stroke="#456" strokeWidth="2.5" /><rect x="30" y="30" width="18" height="18" rx="3" fill="#5e8f5e" /><path d="M39 33V45M33 39H45" stroke="#fff" strokeWidth="3" /></>),
  eye: (<><path d="M1 22Q22 4 44 24 24 42 1 22Z" fill="#eee" stroke="#999" strokeWidth="2.5" /><circle cx="22" cy="22" r="9" fill="#5f8fc0" /><circle cx="22" cy="22" r="4" fill="#222" /><path d="M32 36H48L40 46Z" fill="#555" /></>),
  filterDrop: (<><Filter /><path d="M32 36H48L40 46Z" fill="#555" /></>),
  epsilon: (<><path d="M25 7C12 4 7 10 12 17 4 22 6 34 26 30" fill="none" stroke="#5a2f7a" strokeWidth="3" /><path d="M24 30H46L40 36V47H32V36Z" fill="#aaa" stroke="#888" /></>),
  rmLayer: (<><rect x="3" y="3" width="34" height="34" fill="#fdfdfd" stroke="#7a7a7a" strokeWidth="3" /><rect x="28" y="30" width="18" height="17" rx="3" fill="#ea5050" /><path d="M31 38.5H43" stroke="#fff" strokeWidth="3.5" /></>),
  gears: (<><path d={gear(15, 15, 10, 15, 8)} fill="#c81020" /><circle cx="15" cy="15" r="4" fill="#fff" /><path d={gear(35, 24, 8, 12, 8)} fill="#777" /><circle cx="35" cy="24" r="3" fill="#fff" /><path d={gear(22, 38, 7, 10, 8)} fill="#8ab0de" /><path d="M32 38H48L40 46Z" fill="#555" /></>),
  pyDrop: (<><path d="M24 4C14 4 13 8 13 11V15H25V17H8C3 17 1 21 1 26 1 31 4 34 8 34H13V28C13 24 16 22 20 22H30C33 22 35 20 35 17V11C35 7 31 4 24 4Z" fill="#3f7cae" /><path d="M24 46C33 46 35 42 35 39V34H23V32H39C43 32 45 28 45 23 45 18 43 15 40 15H35V20C35 24 32 26 28 26H18C15 26 13 28 13 31V39C13 43 16 46 24 46Z" fill="#ffd43b" /><path d="M34 36H48L41 45Z" fill="#555" /></>),
  doc: (<><path d="M8 2H32L42 12V46H8Z" fill="#fff" stroke="#666" strokeWidth="2.4" /><path d="M32 2V12H42" fill="#eee" stroke="#666" strokeWidth="2" /><path d="M14 18H36M14 25H36M14 32H36M14 39H30" stroke="#777" strokeWidth="2.4" /></>),
  editSel: (<><rect x="3" y="4" width="30" height="30" fill="#ffe05a" stroke="#c9a300" strokeWidth="2" /><path d="M24 46L28 34 40 18 46 22 32 40Z" fill="#ffdc55" stroke="#8a7a20" /></>),
  wrench: <Wrench />,
  green: (<><path d="M17 7H10Q5 7 5 12V34Q5 39 10 39H18M31 7H38Q43 7 43 12V34Q43 39 38 39H30" fill="none" stroke="#5e9a5e" strokeWidth="6" /><path d="M25 0L16 8 25 16ZM23 31V47L32 39Z" fill="#7fb87f" stroke="#5e9a5e" strokeWidth="1.5" /><path d="M23 10H29V20M25 37H19V28" stroke="#7fb87f" strokeWidth="4" fill="none" /></>),
  warn: (<><path d="M24 4L44 44H4Z" fill="#ffd02f" stroke="#d07a1a" strokeWidth="3" /><path d="M24 16V32" stroke="#c04010" strokeWidth="4" /><circle cx="24" cy="38" r="2.4" fill="#c04010" /></>),
  dd: (<><path d="M4 24L12 12V38Z" fill="#777" /><rect x="11" y="3" width="28" height="42" fill="#fff" stroke="#666" strokeWidth="2.5" /><path d="M17 14H35M17 33H35" stroke="#666" strokeWidth="4.5" /><path d="M11 24H39" stroke="#666" strokeWidth="2" /></>),
  idTree: (<><rect x="4" y="4" width="40" height="34" rx="2" fill="#eee" stroke="#bbb" strokeWidth="2" /><path d="M9 14H16M22 14H38M9 28H16M22 28H38" stroke="#bbb" strokeWidth="4" /></>),
  starExp: (<><TreeArrow /><path d="M12 2L16 12H26L18 18 21 28 12 22 3 28 6 18-2 12H8Z" fill="#ffdd33" stroke="#e08a10" strokeWidth="1.5" /></>),
  deselSm: (<><rect x="3" y="6" width="26" height="22" fill="#ffe04d" stroke="#c9a300" strokeWidth="2" /><rect x="10" y="12" width="26" height="22" fill="#ffe04d" stroke="#c9a300" strokeWidth="2" /><rect x="28" y="28" width="18" height="15" rx="3" fill="#e01f1f" /><path d="M32 40L42 31" stroke="#fff" strokeWidth="2.5" /></>),
  print: (<><rect x="10" y="2" width="28" height="14" fill="#eee" stroke="#ccc" strokeWidth="2" /><rect x="2" y="14" width="44" height="20" rx="5" fill="#ccc" /><rect x="12" y="26" width="24" height="20" fill="#f2f2f2" stroke="#bbb" strokeWidth="2" /></>),
  copyOff: (<><Page x={18} w={24} y={4} h={30} /><Page x={6} w={26} y={12} h={34} /></>),
  idMode: (<><rect x="8" y="4" width="36" height="32" fill="#e0e0e0" stroke="#555" strokeDasharray="4 3" strokeWidth="1.6" /><circle cx="14" cy="12" r="11" fill="#6f98c6" /><path d="M15 10L13 18" stroke="#fff" strokeWidth="3.5" /><Cursor x={22} y={14} s={1} /></>),
  mouse: (<><path d="M12 4L30 26C34 32 28 40 20 34L6 16C2 8 8 2 12 4Z" fill="#fff" stroke="#222" strokeWidth="3" /><path d="M8 12L18 8M14 20L24 14M20 30L30 24" stroke="#222" strokeWidth="3" /><path d="M30 4L36 2M34 10L40 8" stroke="#777" strokeWidth="2" /></>),
  lock: (<><path d="M14 22V13C14 3 34 3 34 13V22" fill="none" stroke="#888" strokeWidth="4" /><rect x="10" y="22" width="28" height="24" rx="3" fill="#888" /></>),
  msg: (<><path d="M24 6C36 6 46 12 46 21 46 30 36 35 26 35L22 44 20 35C10 34 2 29 2 21 2 12 12 6 24 6Z" fill="#777" /><circle cx="14" cy="21" r="3" fill="#fff" /><circle cx="24" cy="21" r="3" fill="#fff" /><circle cx="34" cy="21" r="3" fill="#fff" /></>),
  crs: (<><ellipse cx="24" cy="24" rx="22" ry="14" fill="none" stroke="#888" strokeWidth="2.5" /><ellipse cx="24" cy="24" rx="9" ry="14" fill="none" stroke="#888" strokeWidth="2" /><path d="M3 18H45M3 30H45M24 10V38" stroke="#888" strokeWidth="2" /></>),
  search: (<><circle cx="20" cy="20" r="13" fill="none" stroke="#888" strokeWidth="4" /><path d="M29 29L44 44" stroke="#888" strokeWidth="5" /></>),
  statusBtn: (<><path d="M4 12H44V34H4Z" fill="none" stroke="#888" strokeWidth="3" /><path d="M12 4V12M20 4V12M28 4V12M36 4V12M12 34V42M20 34V42M28 34V42M36 34V42" stroke="#888" strokeWidth="2.5" /></>),
  clockSm: (<><circle cx="24" cy="24" r="21" fill="#fff" stroke="#888" strokeWidth="3" /><path d="M24 10V25L33 31" stroke="#888" strokeWidth="2.5" fill="none" /></>),
  star: (<path d="M24 1L30 17H47L33 28 39 47 24 36 9 47 15 28 1 17H18Z" fill="#ffe04d" stroke="#d6b200" strokeWidth="2" />),
  bookmarkTree: (<><path d="M5 6H42V44H10L5 40Z" fill="#eaeaea" stroke="#999" strokeWidth="2" /><path d="M24 2H34V22L29 28 24 22Z" fill="#7fa7cf" stroke="#3f6a94" /></>),
  home: (<><rect x="2" y="4" width="44" height="40" fill="#f6f6f6" stroke="#8a8a8a" strokeWidth="2.5" /><path d="M10 25L24 12 38 25H34V38H14V25Z" fill="#fff" stroke="#333" strokeWidth="2.5" /></>),
  drive: (<><path d="M3 5H22L26 11H45V44H3Z" fill="#eee" stroke="#999" strokeWidth="2.5" /><path d="M3 14H45" stroke="#999" strokeWidth="2.5" /><path d="M3 5H22L26 11H30" stroke="#777" strokeWidth="3" fill="none" /></>),
  folder: (<path d="M3 8Q3 4 7 4H18L23 10H43Q46 10 46 13V43Q46 46 43 46H6Q3 46 3 43Z" fill="#f2f2f2" stroke="#8a8a8a" strokeWidth="2.5" />),
  gpkgTree: (<><path d="M3 20L24 30 45 20V36L24 46 3 36Z" fill="#ffe04d" stroke="#555" strokeWidth="2" /><path d="M3 20L24 30V46L3 36Z" fill="#d4ac0d" stroke="#555" strokeWidth="2" /><circle cx="24" cy="17" r="15" fill="#6f98c6" stroke="#3f6a94" /><path d="M16 14l8 2 2 8 6-9-6-6z" fill="#556" /></>),
  quill: (<path d="M3 47C6 28 20 10 44 4 42 22 30 36 12 38Z" fill="#9dbad8" stroke="#45698c" strokeWidth="2" />),
  bufferAlg: (<><path d="M4 46V8Q4 3 9 3H46V20H24V46Z" fill="#6a8296" stroke="#4a5a6a" strokeWidth="2" /><path d="M13 42V12H42" fill="none" stroke="#ddd" strokeWidth="2.5" /></>),
  algGear: (<><path d={gear(24, 24, 14, 22, 8)} fill="#88a9da" stroke="#6a88b8" /><circle cx="24" cy="24" r="7" fill="#fff" stroke="#6a88b8" /></>),
  qgisLogo: <Logo />,
  gdal: <Gdal />,
  trashRed: (<><path d="M16 4H32V9H16ZM6 9H42V14H6Z" fill="none" stroke="#c00" strokeWidth="3" /><path d="M10 14H38V46H10Z" fill="#fff" stroke="#c00" strokeWidth="3" /><path d="M18 19V41M24 19V41M30 19V41" stroke="#c00" strokeWidth="3" /></>),
  bars: (<><path d="M2 2V46H46" fill="none" stroke="#aaa" strokeWidth="2" /><path d="M8 46V24M15 46V10M22 46V26M29 46V18M36 46V28M43 46V30" stroke="#1a2fd0" strokeWidth="5" /></>),
};

const Svg = styled.svg<{ $off?: boolean }>`
  display: block;
  flex: none;
  overflow: visible;
  ${(p) => (p.$off ? 'opacity: .42; filter: grayscale(.75);' : '')}
`;
const G = ({ n, s = 48, off, w }: { n: string; s?: number; off?: boolean; w?: number }) => (
  <Svg $off={off} width={w ?? s} height={s} viewBox="0 0 48 48" preserveAspectRatio="none">{ICONS[n]}</Svg>
);

const Root = styled.div`
  position: relative;
  width: 3840px;
  height: 2108px;
  display: flex;
  flex-direction: column;
  background: #f0f0f0;
  overflow: hidden;
`;
const TitleBar = styled.div`
  height: 34px;
  background: #fff;
  display: flex;
  align-items: center;
  padding-left: 3px;
  gap: 7px;
  color: #9a9a9a;
  flex: none;
`;
const TitleText = styled.span`
  font-size: 18px;
`;
const WinControls = styled.div`
  margin-left: auto;
  display: flex;
  gap: 53px;
  padding-right: 31px;
`;
const MenuBar = styled.div`
  height: 29px;
  flex: none;
  background: #efefef;
  display: flex;
  align-items: center;
  padding-left: 13px;
  gap: 14.6px;
  font-size: 18px;
  color: #8c8c8c;
  border-bottom: 1px solid #cfcfcf;
`;
const Mnem = styled.span`text-decoration: underline;`;
const ToolRow = styled.div<{ $pad: number }>`
  height: 67px;
  flex: none;
  display: flex;
  align-items: center;
  padding-left: ${(p) => p.$pad}px;
  background: linear-gradient(#fafafa, #efefef);
  border-bottom: 2px solid #b9b9b9;
`;
const Tool = styled.div<{ $w?: number; $on?: boolean }>`
  width: ${(p) => p.$w ?? 57}px;
  height: 54px;
  flex: none;
  display: flex;
  align-items: center;
  justify-content: center;
  ${(p) => (p.$on ? 'background: #dcdcdc; border: 1px solid #a8a8a8; border-radius: 3px;' : '')}
`;
const Grip = styled.div<{ $w: number }>`
  width: ${(p) => p.$w}px;
  flex: none;
  height: 20px;
  display: flex;
  justify-content: center;
  &::after {
    content: "";
    width: 4px;
    height: 20px;
    border-left: 2px dotted #cfcfcf;
    border-right: 2px dotted #cfcfcf;
  }
`;
const Sep = styled.div<{ $w: number }>`
  width: ${(p) => p.$w}px;
  height: 48px;
  flex: none;
  display: flex;
  justify-content: center;
  &::after { content: ""; width: 1px; background: #d4d4d4; }
`;
const DropTri = styled.div<{ $w?: number; $off?: boolean }>`
  width: ${(p) => p.$w ?? 18}px;
  flex: none;
  display: flex;
  justify-content: center;
  &::after {
    content: "";
    border-left: 5px solid transparent;
    border-right: 5px solid transparent;
    border-top: 7px solid ${(p) => (p.$off ? '#bbb' : '#555')};
  }
`;

type Item = { n?: string; w?: number; off?: boolean; on?: boolean; k?: string };
const t = (n: string, w?: number, off?: boolean, on?: boolean): Item => ({ n, w, off, on });
const grip = (w: number): Item => ({ k: 'grip', w });
const sep = (w: number): Item => ({ k: 'sep', w });
const drop = (w?: number, off?: boolean): Item => ({ k: 'drop', w, off });

const ROW1: Item[] = [
  t('new'), t('open'), t('save'), t('saveAs'), t('props'), t('style'), grip(24),
  t('hand'), t('pan'), t('zin'), t('zout'), t('zfull'), t('zsel'), t('zlayer'), t('z11', 57, true), t('zlast'), t('znext', 57, true),
  t('map'), t('map3d', 68), t('bmNew', 55), t('bm', 48), t('clock', 55), t('refresh', 57), grip(24),
  t('select'), drop(), t('attrsel'), drop(), t('desel'), drop(), t('selLoc'), grip(25),
  t('identify', 56, false, true), t('abacus', 58), t('gear', 56, false, true), t('sigma', 58), t('table', 56), drop(19), t('measure'), drop(19), t('tips', 57, false, true), t('gearPlay', 56, true), drop(18, true),
];
const ROW2: Item[] = [
  t('dataSrc'), t('gpkg'), t('shp'), t('feather'), t('chip'), t('mesh'), t('vnew'), grip(24),
  t('pencils', 54, true), t('pencil', 58), t('saveEdit', 58, true), t('addLine', 58, true), drop(25), t('addFeat', 58, true), t('vertex', 50, true), drop(14),
  t('editTable', 57, true), t('trash', 57, true), t('cut', 58, true), t('copy', 56, true), t('paste', 57, true), t('undo', 58, true), t('redo', 57, true), grip(22),
  t('abc'), t('chart', 54), sep(11), t('abPin'), t('abcRed'), sep(11), t('abDis', 57, true), t('abcEye', 57, true), t('abcMove', 57, true), t('abcRot', 57, true), t('abcEdit', 57, true), grip(30),
  t('globeAdd'), t('globeFind'), grip(22), t('python', 56), t('pave', 56), t('plugin'), t('vscode'), drop(19), t('bug', 56), t('hammer'), t('reload', 56), drop(19), t('plugin'), t('dbFind'), grip(26), t('help'),
];
const ROW3: Item[] = [grip(10), t('pic'), grip(25), t('qSearch'), t('mapBrush', 50)];

const renderItems = (items: Item[]) =>
  items.map((it, i) => {
    if (it.k === 'grip') return <Grip key={i} $w={it.w!} />;
    if (it.k === 'sep') return <Sep key={i} $w={it.w!} />;
    if (it.k === 'drop') return <DropTri key={i} $w={it.w} $off={it.off} />;
    return (
      <Tool key={i} $w={it.w} $on={it.on}>
        <G n={it.n!} off={it.off} />
      </Tool>
    );
  });

const Main = styled.div`
  flex: 1;
  display: flex;
  min-height: 0;
`;
const LeftDock = styled.div`
  width: 668px;
  flex: none;
  display: flex;
  flex-direction: column;
  overflow: hidden;
`;
const Canvas = styled.div`
  flex: 1;
  background: #fff;
  border-left: 1px solid #b8b8b8;
  border-right: 1px solid #b8b8b8;
  min-width: 0;
`;
const MapSvg = styled.svg`
  display: block;
`;
const RightDock = styled.div`
  width: 494px;
  flex: none;
  display: flex;
  flex-direction: column;
  padding-left: 9px;
  overflow: hidden;
`;
const DockTitle = styled.div<{ $h?: number; $flush?: boolean; $pb?: number }>`
  height: ${(p) => p.$h ?? 42}px;
  flex: none;
  display: flex;
  align-items: center;
  justify-content: space-between;
  padding: 0 ${(p) => (p.$flush ? '0' : '10px')} ${(p) => p.$pb ?? 0}px ${(p) => (p.$flush ? 5 : 4)}px;
  font-size: 18px;
  color: #222;
  position: relative;
`;
const FloatBtns = styled.div`
  display: flex;
  gap: 0;
`;
const MiniIcon = () => (
  <svg width="32" height="12" viewBox="0 0 32 12"><rect x="0.5" y="1" width="10" height="10" rx="2" fill="none" stroke="#777" /><rect x="3" y="3.5" width="5" height="5" fill="none" stroke="#777" /><rect x="15.5" y="1" width="10" height="10" rx="2" fill="none" stroke="#777" /><path d="M18 3.5l5 5M23 3.5l-5 5" stroke="#333" strokeWidth="1.3" /></svg>
);
const DockTools = styled.div<{ $h?: number; $pad?: number; $pb?: number }>`
  height: ${(p) => p.$h ?? 47}px;
  flex: none;
  display: flex;
  align-items: center;
  padding-left: ${(p) => p.$pad ?? 6}px;
  padding-bottom: ${(p) => p.$pb ?? 6}px;
`;
const DockTool = styled.div<{ $w?: number; $on?: boolean }>`
  width: ${(p) => p.$w ?? 41}px;
  height: 40px;
  flex: none;
  display: flex;
  align-items: center;
  justify-content: center;
  ${(p) => (p.$on ? 'background: #dcdcdc; border: 1px solid #ababab; border-radius: 3px;' : '')}
`;
const MoreBtn = styled.div`
  width: 34px;
  margin-left: 12px;
  flex: none;
  text-align: center;
  font-size: 24px;
  color: #333;
`;
const TreeBox = styled.div<{ $h: number; $block?: boolean }>`
  height: ${(p) => p.$h}px;
  width: 658px;
  flex: none;
  background: #fff;
  border: 1px solid #a9a9a9;
  border-left: 0;
  position: relative;
  display: ${(p) => (p.$block ? 'block' : 'flex')};
  overflow: hidden;
`;
const TreeList = styled.div`
  flex: 1;
  min-width: 0;
  overflow: hidden;
`;
const Row = styled.div<{ $lvl: number; $sel?: boolean }>`
  height: 27px;
  display: flex;
  align-items: center;
  padding-left: ${(p) => p.$lvl}px;
  font-size: 18px;
  color: #222;
  white-space: nowrap;
  position: relative;
  ${(p) => (p.$sel ? 'background: #f0f0f0;' : '')}
`;
const CaretBox = styled.div`
  width: 24px;
  height: 27px;
  flex: none;
  display: flex;
  align-items: center;
  justify-content: center;
`;
const Caret = styled.span<{ $open?: boolean }>`
  display: block;
  ${(p) =>
    p.$open
      ? 'border-left: 6px solid transparent; border-right: 6px solid transparent; border-top: 6px solid #555;'
      : 'border-top: 6px solid transparent; border-bottom: 6px solid transparent; border-left: 6px solid #555;'}
`;
const RowIcon = styled.div<{ $w?: number; $ml?: number }>`
  width: ${(p) => p.$w ?? 24}px;
  flex: none;
  margin: 0 6px 0 ${(p) => p.$ml ?? 0}px;
  display: flex;
  justify-content: center;
`;
const VScroll = styled.div<{ $w?: number }>`
  width: ${(p) => p.$w ?? 20}px;
  flex: none;
  display: flex;
  flex-direction: column;
  background: #fff;
  border-left: 1px solid #d0d0d0;
`;
const ScrollBtn = styled.div`
  height: 20px;
  flex: none;
  display: flex;
  align-items: center;
  justify-content: center;
  border-bottom: 1px solid #d5d5d5;
`;
const Tri = styled.span<{ $up?: boolean; $c?: string; $s?: number }>`
  display: block;
  border-left: ${(p) => p.$s ?? 6}px solid transparent;
  border-right: ${(p) => p.$s ?? 6}px solid transparent;
  ${(p) => (p.$up ? 'border-bottom' : 'border-top')}: ${(p) => p.$s ?? 6}px solid ${(p) => p.$c ?? '#555'};
`;
const ScrollThumb = styled.div<{ $h: number }>`
  height: ${(p) => p.$h}px;
  flex: none;
  background: linear-gradient(90deg, #fbfbfb, #fff);
  border-bottom: 1px solid #d5d5d5;
`;
const ScrollTrack = styled.div<{ $plain?: boolean }>`
  flex: 1;
  background: ${(p) => (p.$plain ? '#fff' : '#e6e6e6')};
`;
const DockTabs = styled.div`
  display: flex;
  height: 50px;
  flex: none;
`;
const DockTab = styled.div<{ $on?: boolean; $w: number }>`
  width: ${(p) => p.$w}px;
  display: flex;
  align-items: center;
  justify-content: center;
  font-size: 26px;
  color: #111;
  height: ${(p) => (p.$on ? 50 : 47)}px;
  ${(p) =>
    p.$on
      ? 'background: #f2f2f2; border: 1px solid #c0c0c0; border-top: 0; border-radius: 0 0 3px 3px;'
      : 'background: #dcdcdc; border-bottom: 1px solid #c0c0c0;'}
`;
const GpsWrap = styled.div`
  height: 230px;
  width: 658px;
  flex: none;
  display: flex;
`;
const GpsMain = styled.div`
  width: 636px;
  flex: none;
  padding: 2px 0 0 2px;
  display: flex;
  flex-direction: column;
`;
const GpsRow = styled.div<{ $h: number }>`
  height: ${(p) => p.$h}px;
  flex: none;
  display: flex;
  align-items: center;
`;
const BigBtn = styled.div<{ $off?: boolean }>`
  width: 592px;
  height: 100%;
  flex: none;
  display: flex;
  align-items: center;
  justify-content: center;
  font-size: 26px;
  color: ${(p) => (p.$off ? '#808080' : '#111')};
  background: linear-gradient(#fcfcfc, #ececec);
  border: 1px solid #b5b5b5;
  border-radius: 3px;
`;
const Swatch = styled.div`
  width: 42px;
  height: 100%;
  background: #808080;
  border: 1px solid #111;
`;
const TrashBtn = styled.div`
  width: 42px;
  height: 30px;
  display: flex;
  align-items: center;
  justify-content: center;
  border: 1px solid #c5c5c5;
  border-radius: 3px;
  background: #f3f3f3;
`;
const GpsIcons = styled.div`
  display: flex;
  gap: 12px;
  padding-left: 6px;
  flex: 1;
  align-items: center;
`;
const GpsBtn = styled.div<{ $w: number; $off?: boolean }>`
  width: ${(p) => p.$w}px;
  height: 44px;
  flex: none;
  margin-left: 3px;
  display: flex;
  align-items: center;
  justify-content: center;
  font-size: 26px;
  color: ${(p) => (p.$off ? '#777' : '#000')};
  background: #f5f5f5;
  border: 1px solid #c5c5c5;
  border-radius: 3px;
`;
const GpsInner = styled.div`
  flex: 1;
  display: flex;
  min-height: 0;
`;
const GpsGroup = styled.div`
  flex: 1;
  padding-left: 4px;
  min-width: 0;
`;
const ConnHead = styled.div`
  height: 41px;
  display: flex;
  align-items: center;
  gap: 8px;
  font-size: 27px;
  font-weight: 700;
  padding-left: 2px;
`;
const AutoRow = styled.div`
  height: 44px;
  border-top: 1px solid #cfcfcf;
  border-left: 1px solid #cfcfcf;
  display: flex;
  align-items: center;
  padding-left: 15px;
  gap: 9px;
  font-size: 26px;
  background: #ececec;
`;
const Radio = styled.span`
  width: 20px;
  height: 20px;
  flex: none;
  border-radius: 50%;
  background: #fff;
  border: 1px solid #bbb;
  display: flex;
  align-items: center;
  justify-content: center;
  &::after { content: ""; width: 9px; height: 9px; border-radius: 50%; background: #444; }
`;
const HScroll = styled.div`
  height: 9px;
  background: #fff;
  border-top: 1px solid #cfcfcf;
  display: flex;
  padding: 0 20px;
`;
const HTrack = styled.div`
  margin-left: auto;
  width: 113px;
  background: #e6e6e6;
`;
const CheckBox = styled.span<{ $w?: number; $h?: number; $off?: boolean }>`
  width: ${(p) => p.$w ?? 20}px;
  height: ${(p) => p.$h ?? 22}px;
  flex: none;
  display: flex;
  align-items: center;
  justify-content: center;
  background: ${(p) => (p.$off ? '#efefef' : '#fff')};
  border: 1px solid ${(p) => (p.$off ? '#ccc' : '#bdbdbd')};
`;
const StatusCheck = styled(CheckBox)`
  margin: 0 8px;
`;
const CheckMark = () => (
  <svg width="16" height="18" viewBox="0 0 16 18"><path d="M2 9L6 16 14 2" fill="none" stroke="#111" strokeWidth="2.4" /></svg>
);
const DockGripLine = styled.div`
  height: 10px;
  flex: none;
  display: flex;
  justify-content: center;
  align-items: center;
  &::after { content: ""; width: 18px; border-top: 2px dotted #bcbcbc; }
`;
const LayerRow = styled.div<{ $sel?: boolean }>`
  height: 27px;
  display: flex;
  align-items: center;
  padding-left: 35px;
  font-size: 18px;
  font-weight: 700;
  position: relative;
  ${(p) => (p.$sel ? 'background: #f0f0f0;' : '')}
`;
const LayerSym = styled.div`
  width: 24px;
  margin: 0 6px 0 6px;
  display: flex;
  align-items: center;
  justify-content: center;
  flex: none;
`;
const SymRect = styled.span`
  width: 24px;
  height: 24px;
  background: #9a79b4;
  border: 1px solid #666;
`;
const SymDot = styled.span<{ $c: string }>`
  width: 8px;
  height: 10px;
  border-radius: 50%;
  background: ${(p) => p.$c};
`;
const SymLine = styled.span`
  width: 24px;
  height: 2px;
  background: #4a90c8;
`;
const LayerName = styled.span<{ $ul?: boolean }>`
  ${(p) => (p.$ul ? 'text-decoration: underline;' : '')}
  white-space: nowrap;
`;
const Indicator = styled.div`
  position: absolute;
  right: 13px;
  top: 2px;
  width: 22px;
  height: 24px;
  border: 1px solid #dcdcdc;
  border-radius: 3px;
  display: flex;
  align-items: center;
  justify-content: center;
`;
const RedMark = styled.svg<{ $l: number }>`
  position: absolute;
  left: ${(p) => p.$l}px;
  top: -1px;
`;
const Marker = styled.div<{ $l?: number; $t?: number; $w: number; $h: number }>`
  position: absolute;
  left: ${(p) => p.$l ?? 0}px;
  top: ${(p) => p.$t ?? 0}px;
  width: ${(p) => p.$w}px;
  height: ${(p) => p.$h}px;
  background: #f2f200;
  z-index: 0;
`;
const SearchBox = styled.div`
  height: 40px;
  flex: none;
  background: #fff;
  border: 1px solid #bbb;
  border-radius: 3px 3px 0 0;
  display: flex;
  align-items: center;
  padding: 0 10px 0 11px;
  gap: 10px;
  font-size: 28px;
  color: #000;
`;
const ClearBtn = styled.svg<{ $mr?: number }>`
  margin-left: auto;
  margin-right: ${(p) => p.$mr ?? 0}px;
  flex: none;
`;
const SubTree = styled.div<{ $h: number }>`
  height: ${(p) => p.$h}px;
  flex: none;
  background: #fff;
  border: 1px solid #b5b5b5;
  border-top: 0;
  padding-top: 2px;
  overflow: hidden;
`;
const EmptyBox = styled.div<{ $h: number; $mt?: number }>`
  height: ${(p) => p.$h}px;
  margin-top: ${(p) => p.$mt ?? 0}px;
  flex: none;
  background: #fff;
  border: 1px solid #b5b5b5;
`;
const SmallSep = styled.div`
  width: 9px;
  height: 30px;
  flex: none;
  display: flex;
  justify-content: center;
  &::after { content: ""; width: 1px; background: #d0d0d0; }
`;
const IdTable = styled.div`
  height: 485px;
  flex: none;
  background: #fff;
  border: 1px solid #b5b5b5;
  display: flex;
  flex-direction: column;
`;
const IdHeader = styled.div`
  height: 32px;
  flex: none;
  display: flex;
  background: linear-gradient(#fafafa, #ececec);
  border-bottom: 1px solid #c5c5c5;
  font-size: 18px;
`;
const IdCol = styled.div<{ $w?: number }>`
  ${(p) => (p.$w ? `width: ${p.$w}px; border-right: 1px solid #ccc;` : 'flex: 1;')}
  display: flex;
  align-items: center;
  padding-left: 4px;
`;
const ModeRow = styled.div<{ $h: number; $mt?: number }>`
  height: ${(p) => p.$h}px;
  margin-top: ${(p) => p.$mt ?? 0}px;
  flex: none;
  display: flex;
  align-items: center;
  font-size: 26px;
  padding-left: 6px;
  gap: 7px;
`;
const ModeLabel = styled.span<{ $off?: boolean; $w: number }>`
  width: ${(p) => p.$w}px;
  flex: none;
  color: ${(p) => (p.$off ? '#888' : '#000')};
`;
const ModeCombo = styled.div<{ $w: number; $off?: boolean }>`
  width: ${(p) => p.$w}px;
  height: 40px;
  flex: none;
  display: flex;
  align-items: center;
  justify-content: space-between;
  padding: 0 15px 0 5px;
  color: ${(p) => (p.$off ? '#888' : '#000')};
  background: linear-gradient(#fbfbfb, #eeeeee);
  border: 1px solid #c0c0c0;
  border-radius: 3px;
`;
const StatusBar = styled.div`
  height: 50px;
  flex: none;
  display: flex;
  align-items: center;
  padding: 2px 10px 0 2px;
  font-size: 26px;
  background: #f0f0f0;
  border-top: 1px solid #bdbdbd;
`;
const Locator = styled.div`
  width: 491px;
  height: 34px;
  flex: none;
  background: #fff;
  border: 1px solid #c0c0c0;
  border-radius: 3px;
  display: flex;
  align-items: center;
  gap: 8px;
  padding-left: 12px;
  color: #777;
  font-size: 25px;
  margin-right: auto;
`;
const SLabel = styled.span<{ $w: number; $ml?: number }>`
  width: ${(p) => p.$w}px;
  margin-left: ${(p) => p.$ml ?? 0}px;
  flex: none;
  white-space: nowrap;
`;
const SField = styled.div<{ $w: number; $ml?: number }>`
  width: ${(p) => p.$w}px;
  margin-left: ${(p) => p.$ml ?? 0}px;
  height: 40px;
  flex: none;
  display: flex;
  align-items: center;
  justify-content: space-between;
  padding-left: 5px;
  background: #fff;
  border: 1px solid #c5c5c5;
  border-radius: 3px;
  white-space: nowrap;
  overflow: hidden;
`;
const SBtn = styled.div<{ $w: number }>`
  width: ${(p) => p.$w}px;
  align-self: stretch;
  flex: none;
  display: flex;
  flex-direction: column;
  align-items: center;
  justify-content: center;
  gap: 7px;
  background: #f5f5f5;
  border-left: 1px solid #ddd;
`;
const SIcon = styled.div<{ $w: number; $ml?: number }>`
  width: ${(p) => p.$w}px;
  margin-left: ${(p) => p.$ml ?? 0}px;
  flex: none;
  display: flex;
  justify-content: center;
`;
const Strip = styled.div`
  height: 8px;
  flex: none;
  background: #202020;
`;

const Dialog = styled.div`
  position: absolute;
  left: 1170px;
  top: 906px;
  width: 1796px;
  height: 1127px;
  background: #f0f0f0;
  border: 2px solid #686868;
  box-shadow: 0 6px 28px rgba(0, 0, 0, .35);
  display: flex;
  flex-direction: column;
`;
const DlgTitle = styled.div`
  height: 42px;
  flex: none;
  background: #fff;
  display: flex;
  align-items: center;
  padding: 0 10px 0 10px;
  gap: 10px;
  font-size: 18px;
  color: #555;
`;
const DlgClose = styled.svg`
  margin-left: auto;
`;
const DlgBody = styled.div`
  flex: 1;
  padding: 16px 15px 0 16px;
  display: flex;
  flex-direction: column;
`;
const DlgCols = styled.div`
  height: 899px;
  flex: none;
  display: flex;
`;
const ParamCol = styled.div`
  width: 1153px;
  flex: none;
  display: flex;
  flex-direction: column;
`;
const Tabs = styled.div`
  display: flex;
  height: 50px;
  flex: none;
  align-items: flex-end;
  position: relative;
  z-index: 1;
  margin-bottom: -1px;
`;
const Tab = styled.div<{ $on?: boolean; $w: number }>`
  width: ${(p) => p.$w}px;
  height: ${(p) => (p.$on ? 50 : 47)}px;
  display: flex;
  align-items: center;
  justify-content: center;
  font-size: 26px;
  padding-top: 2px;
  border: 1px solid #b8b8b8;
  border-radius: 3px 3px 0 0;
  ${(p) => (p.$on ? 'background: #fbfbfb; border-bottom-color: #fbfbfb;' : 'background: #ececec; border-left: 0;')}
`;
const Pane = styled.div`
  flex: 1;
  padding: 0 5px;
  background: linear-gradient(#fbfbfb 0, #f0f0f0 10px);
  border: 1px solid #b8b8b8;
  display: flex;
  flex-direction: column;
  font-size: 26px;
`;
const Label = styled.div<{ $mt: number; $off?: boolean; $ls?: number }>`
  height: 30px;
  margin-top: ${(p) => p.$mt}px;
  flex: none;
  display: flex;
  align-items: center;
  gap: 8px;
  letter-spacing: ${(p) => p.$ls ?? 0}px;
  color: ${(p) => (p.$off ? '#777' : '#000')};
  white-space: nowrap;
`;
const Line = styled.div<{ $mt: number; $h?: number }>`
  height: ${(p) => p.$h ?? 40}px;
  margin-top: ${(p) => p.$mt}px;
  flex: none;
  display: flex;
  align-items: stretch;
  position: relative;
`;
const Combo = styled.div<{ $w?: number }>`
  ${(p) => (p.$w ? `width: ${p.$w}px; flex: none;` : 'flex: 1;')}
  display: flex;
  align-items: center;
  padding: 0 15px 0 6px;
  background: linear-gradient(#fcfcfc, #ececec);
  border: 1px solid #b5b5b5;
  border-radius: 3px;
  justify-content: space-between;
`;
const Input = styled.div<{ $w?: number; $ph?: boolean }>`
  ${(p) => (p.$w ? `width: ${p.$w}px; flex: none;` : 'flex: 1;')}
  display: flex;
  align-items: center;
  padding-left: 6px;
  background: #fff;
  border: 1px solid #b5b5b5;
  border-radius: 3px;
  color: ${(p) => (p.$ph ? '#888' : '#000')};
`;
const OverText = styled.span`
  position: relative;
  z-index: 1;
  display: flex;
  align-items: center;
  gap: 7px;
`;
const Spin = styled.div<{ $flush?: boolean }>`
  width: 20px;
  margin-left: ${(p) => (p.$flush ? '0' : 'auto')};
  align-self: stretch;
  flex: none;
  display: flex;
  flex-direction: column;
  align-items: center;
  justify-content: center;
  gap: 9px;
  border-left: 1px solid #ddd;
  background: #f6f6f6;
`;
const DotBtn = styled.div`
  width: 45px;
  margin-left: auto;
  flex: none;
  position: relative;
  display: flex;
  align-items: flex-end;
  padding: 0 0 4px 12px;
  background: #f7f7f7;
  border: 1px solid #c0c0c0;
  border-radius: 3px;
  font-size: 22px;
  line-height: 1;
`;
const DotCaret = styled.span`
  position: absolute;
  right: 3px;
  bottom: 10px;
`;
const DdCaret = styled.span`
  position: absolute;
  right: 0;
  bottom: -2px;
`;
const SideIcon = styled.div<{ $l: number }>`
  margin-left: ${(p) => p.$l}px;
  flex: none;
  display: flex;
  align-items: center;
`;
const Deg = styled.span`
  margin-left: 18px;
  flex: none;
  display: flex;
  align-items: center;
`;
const Splitter = styled.div`
  width: 17px;
  flex: none;
  padding: 8px 0 0 4px;
`;
const HelpPane = styled.div`
  width: 591px;
  flex: none;
  background: #fff;
  border: 1px solid #b8b8b8;
  padding: 0 3px;
  color: #555;
  font-size: 27px;
  line-height: 33px;
`;
const HelpTitle = styled.h2`
  margin: 7px 0 13px;
  font-size: 42px;
  line-height: 48px;
  font-weight: 700;
  color: #4a4a4a;
`;
const HelpP = styled.p`
  margin: 0 0 11.5px;
`;
const ProgRow = styled.div`
  margin-top: 55px;
  height: 40px;
  flex: none;
  display: flex;
  align-items: stretch;
  font-size: 26px;
`;
const Progress = styled.div`
  width: 1662px;
  flex: none;
  display: flex;
  align-items: center;
  justify-content: center;
  background: #fff;
  border: 1px solid #bcbcbc;
  border-radius: 3px;
`;
const CancelTxt = styled.div`
  flex: 1;
  text-align: center;
  align-self: center;
  padding-left: 6px;
  color: #8a8a8a;
`;
const BtnRow = styled.div`
  margin-top: 13px;
  height: 42px;
  flex: none;
  display: flex;
  align-items: stretch;
  font-size: 26px;
`;
const DBtn = styled.div<{ $w: number; $ml?: number; $focus?: boolean }>`
  width: ${(p) => p.$w}px;
  margin-left: ${(p) => p.$ml ?? 0}px;
  flex: none;
  display: flex;
  align-items: center;
  justify-content: center;
  gap: 3px;
  background: ${(p) => (p.$focus ? '#e6f0fa' : '#f5f5f5')};
  border: 1px solid ${(p) => (p.$focus ? '#3b86d6' : '#c0c0c0')};
  border-radius: 3px;
  white-space: nowrap;
`;

const Mn = ({ t: a, u, r }: { t?: string; u: string; r: string }) => (
  <span>{a}<Mnem>{u}</Mnem>{r}</span>
);

const BROWSER: { txt: string; icon: string; lvl: number; c?: boolean; open?: boolean }[] = [
  { txt: 'Favorites', icon: 'star', lvl: 0 },
  { txt: 'Spatial Bookmarks', icon: 'bookmarkTree', lvl: 0, c: true },
  { txt: 'Home', icon: 'home', lvl: 0, c: true },
  { txt: 'C:\\ (Windows)', icon: 'drive', lvl: 0, c: true, open: true },
  ...['android', 'DRIVERS', 'OSGeo4W', 'Program Files', 'Program Files (x86)', 'src', 'temp', 'Users', 'Voiceover', 'Windows', 'work', 'XboxGames'].map((txt) => ({ txt, icon: 'folder', lvl: 1, c: true })),
  { txt: 'D:\\ (Disque)', icon: 'folder', lvl: 0, c: true },
  { txt: 'P:\\ (Users_GPT)', icon: 'folder', lvl: 0, c: true },
  { txt: 'GeoPackage', icon: 'gpkgTree', lvl: 0 },
  { txt: 'SpatiaLite', icon: 'quill', lvl: 0 },
];

const TOOLBOX: { txt: string; icon?: string; x: number; c?: boolean; sel?: boolean; mark?: boolean }[] = [
  { txt: 'Recently used', icon: 'clockSm', x: 3, c: true },
  { txt: 'Buffer', icon: 'bufferAlg', x: 64 },
  { txt: 'Vector geometry', icon: 'qgisLogo', x: 3, c: true },
  { txt: 'Buffer', icon: 'bufferAlg', x: 64, sel: true, mark: true },
  { txt: 'Create wedge buffers', icon: 'algGear', x: 64 },
  { txt: 'Multi-ring buffer (constant distance)', icon: 'algGear', x: 64 },
  { txt: 'Rectangles, ovals, diamonds', icon: 'algGear', x: 64 },
  { txt: 'Single sided buffer', icon: 'algGear', x: 64 },
  { txt: 'Tapered buffers', icon: 'algGear', x: 64 },
  { txt: 'Variable width buffer (by M value)', icon: 'algGear', x: 64 },
  { txt: 'Vector selection', icon: 'qgisLogo', x: 3, c: true },
  { txt: 'Extract within distance', icon: 'algGear', x: 64 },
  { txt: 'Select within distance', icon: 'algGear', x: 64 },
  { txt: 'GDAL', icon: 'gdal', x: 3, c: true },
  { txt: 'Vector geoprocessing', x: 33, c: true },
  { txt: 'Buffer vectors', icon: 'gdal', x: 93 },
  { txt: 'One side buffer', icon: 'gdal', x: 93 },
];

const RED: [number, number][] = [[2679, 361], [2586, 394], [2414, 459], [2300, 495], [2169, 537], [2051, 575], [1941, 611], [1846, 679], [1769, 740], [1696, 768], [1639, 804], [1603, 828], [1567, 853], [1504, 872], [1476, 881], [1439, 894]];
const GREEN: [number, number][] = [[2678, 343], [2408, 439], [2300, 498], [2175, 557], [2050, 572]];

const MapDrawing = () => (
  <MapSvg width="2676" height="1787" viewBox="669 263 2676 1787">
    <polyline points={[...RED.map((p) => p.join(',')), '1406,920'].join(' ')} fill="none" stroke="#3a87c0" strokeWidth="2" />
    {GREEN.map(([x, y], i) => (
      <circle key={i} cx={x} cy={y} r="6.5" fill="#34962f" stroke="#333" strokeWidth="1" />
    ))}
    {RED.map(([x, y], i) => (
      <circle key={i} cx={x} cy={y} r="6.5" fill="#e5141b" stroke="#333" strokeWidth="1" />
    ))}
  </MapSvg>
);

const App = () => (
  <Root>
    <Global />
    <TitleBar>
      <G n="qgisLogo" s={28} w={22} />
      <TitleText>*Untitled Project — QGIS</TitleText>
      <WinControls>
        <svg width="18" height="18" viewBox="0 0 18 18"><path d="M2 10H16" stroke="#cfcfcf" strokeWidth="1.5" /></svg>
        <svg width="18" height="18" viewBox="0 0 18 18"><path d="M5 5V2H16V13H13M2 5H13V16H2Z" fill="none" stroke="#cfcfcf" strokeWidth="1.5" /></svg>
        <svg width="18" height="18" viewBox="0 0 18 18"><path d="M2 2L16 16M16 2L2 16" stroke="#cfcfcf" strokeWidth="1.5" /></svg>
      </WinControls>
    </TitleBar>
    <MenuBar>
      <Mn t="Pro" u="j" r="ect" />
      <Mn u="E" r="dit" />
      <Mn u="V" r="iew" />
      <Mn u="L" r="ayer" />
      <Mn u="S" r="ettings" />
      <Mn u="P" r="lugins" />
      <Mn t="Vect" u="o" r="r" />
      <Mn u="R" r="aster" />
      <Mn u="D" r="atabase" />
      <Mn u="W" r="eb" />
      <Mn u="M" r="esh" />
      <Mn t="Pro" u="c" r="essing" />
      <Mn u="H" r="elp" />
    </MenuBar>
    <ToolRow $pad={17}>{renderItems(ROW1)}</ToolRow>
    <ToolRow $pad={21}>{renderItems(ROW2)}</ToolRow>
    <ToolRow $pad={8}>{renderItems(ROW3)}</ToolRow>
    <Main>
      <LeftDock>
        <DockTitle>Browser<FloatBtns><MiniIcon /></FloatBtns></DockTitle>
        <DockTools>
          {['newConn', 'refresh', 'filter', 'collapse', 'info'].map((n) => (
            <DockTool key={n}><G n={n} s={30} /></DockTool>
          ))}
        </DockTools>
        <TreeBox $h={535}>
          <TreeList>
            {BROWSER.map((r) => (
              <Row key={r.txt} $lvl={r.lvl ? 43 : 6}>
                <CaretBox>{r.c && <Caret $open={r.open} />}</CaretBox>
                <RowIcon $ml={11}><G n={r.icon} s={r.icon === 'star' ? 26 : 22} /></RowIcon>
                <span>{r.txt}</span>
              </Row>
            ))}
          </TreeList>
          <VScroll>
            <ScrollBtn><Tri $up /></ScrollBtn>
            <ScrollThumb $h={229} />
            <ScrollTrack />
            <ScrollBtn><Tri /></ScrollBtn>
          </VScroll>
        </TreeBox>
        <DockTabs>
          <DockTab $w={177}>Layer Order</DockTab>
          <DockTab $w={131} $on>Browser</DockTab>
        </DockTabs>
        <DockGripLine />
        <DockTitle $h={45} $pb={5}>GPS Information<FloatBtns><MiniIcon /></FloatBtns></DockTitle>
        <GpsWrap>
          <GpsMain>
            <GpsRow $h={44}><BigBtn $off><span><Mnem>A</Mnem>dd Polygon</span></BigBtn><Swatch /></GpsRow>
            <GpsRow $h={44}><BigBtn>Add Track Point</BigBtn><TrashBtn><G n="trashRed" s={22} /></TrashBtn></GpsRow>
            <GpsRow $h={46}>
              <GpsIcons>
                <G n="info" s={22} />
                <G n="bars" s={22} />
                <G n="wrench" s={26} />
              </GpsIcons>
              <GpsBtn $w={115} $off>Recenter</GpsBtn>
              <GpsBtn $w={107}><span><Mnem>C</Mnem>onnect</span></GpsBtn>
            </GpsRow>
            <GpsInner>
              <GpsGroup>
                <ConnHead><Tri $s={7} />Connection</ConnHead>
                <AutoRow><Radio />Autodetect</AutoRow>
                <HScroll><HTrack /></HScroll>
              </GpsGroup>
              <VScroll $w={22}>
                <ScrollBtn><Tri $up /></ScrollBtn>
                <ScrollTrack $plain />
                <ScrollBtn><Tri /></ScrollBtn>
              </VScroll>
            </GpsInner>
          </GpsMain>
          <VScroll $w={22}>
            <ScrollBtn><Tri $up /></ScrollBtn>
            <ScrollThumb $h={170} />
            <ScrollTrack />
            <ScrollBtn><Tri /></ScrollBtn>
          </VScroll>
        </GpsWrap>
        <DockGripLine />
        <DockTitle $h={36}>Layers<FloatBtns><MiniIcon /></FloatBtns></DockTitle>
        <DockTools $h={49} $pad={6} $pb={4}>
          <DockTool><G n="brush" s={30} /></DockTool>
          <DockTool><G n="addGroup" s={30} /></DockTool>
          <DockTool><G n="eye" s={30} /></DockTool>
          <DockTool><G n="filterDrop" s={30} /></DockTool>
          <DockTool $w={36}><G n="epsilon" s={30} /></DockTool>
          <DropTri $w={24} />
          <DockTool><G n="expand" s={30} /></DockTool>
          <DockTool><G n="collapse" s={30} /></DockTool>
          <DockTool><G n="rmLayer" s={30} /></DockTool>
        </DockTools>
        <TreeBox $h={732} $block>
          <LayerRow $sel>
            <CheckBox><CheckMark /></CheckBox>
            <LayerSym><SymRect /></LayerSym>
            <LayerName $ul>Buffered</LayerName>
            <RedMark $l={170} width="18" height="32" viewBox="0 0 18 32"><path d="M1 2H14V30H3" fill="none" stroke="#f00" strokeWidth="4" /></RedMark>
            <Indicator><G n="statusBtn" s={16} /></Indicator>
          </LayerRow>
          <LayerRow>
            <CheckBox><CheckMark /></CheckBox>
            <LayerSym><SymDot $c="#e01d21" /></LayerSym>
            <LayerName>Snapped geometry</LayerName>
            <Indicator><G n="statusBtn" s={16} /></Indicator>
          </LayerRow>
          <LayerRow>
            <CheckBox><CheckMark /></CheckBox>
            <LayerSym><SymDot $c="#3b9c34" /></LayerSym>
            <LayerName>point</LayerName>
          </LayerRow>
          <LayerRow>
            <CheckBox><CheckMark /></CheckBox>
            <LayerSym><SymLine /></LayerSym>
            <LayerName>Line</LayerName>
          </LayerRow>
        </TreeBox>
      </LeftDock>
      <Canvas><MapDrawing /></Canvas>
      <RightDock>
        <DockTitle $flush>
          <Marker $l={-13} $t={-5} $w={185} $h={47} />
          <OverText>Processing Toolbox</OverText>
          <FloatBtns><MiniIcon /></FloatBtns>
        </DockTitle>
        <DockTools $h={47} $pad={6}>
          <DockTool><G n="gears" s={32} /></DockTool>
          <DockTool><G n="pyDrop" s={32} /></DockTool>
          <DockTool><G n="clock" s={30} /></DockTool>
          <DockTool $on><G n="doc" s={30} /></DockTool>
          <SmallSep />
          <DockTool><G n="editSel" s={30} /></DockTool>
          <SmallSep />
          <DockTool><G n="wrench" s={32} /></DockTool>
        </DockTools>
        <SearchBox>
          <G n="search" s={18} />
          buff
          <ClearBtn width="22" height="16" viewBox="0 0 22 16"><path d="M6 0H22V16H6L0 8Z" fill="#aaa" /><path d="M10 4L17 12M17 4L10 12" stroke="#fff" strokeWidth="2" /></ClearBtn>
        </SearchBox>
        <SubTree $h={529}>
          {TOOLBOX.map((r, i) => (
            <Row key={i} $lvl={r.x} $sel={r.sel}>
              {r.c && <CaretBox><Caret $open /></CaretBox>}
              {r.icon ? <RowIcon $ml={r.c ? 6 : 0}><G n={r.icon} s={24} /></RowIcon> : <RowIcon $w={0} />}
              <span>{r.txt}</span>
              {r.mark && <RedMark $l={174} width="28" height="32" viewBox="0 0 28 32"><path d="M10 2H25V30H1" fill="none" stroke="#f00" strokeWidth="4" /></RedMark>}
            </Row>
          ))}
        </SubTree>
        <DockGripLine />
        <DockTitle $h={31} $flush>Results Viewer<FloatBtns><MiniIcon /></FloatBtns></DockTitle>
        <EmptyBox $h={206} />
        <EmptyBox $h={210} $mt={8} />
        <DockGripLine />
        <DockTitle $h={30} $flush>Identify Results<FloatBtns><MiniIcon /></FloatBtns></DockTitle>
        <DockTools $h={52} $pad={6} $pb={4}>
          <DockTool><G n="idTree" s={30} off /></DockTool>
          <SmallSep />
          <DockTool><G n="expand" s={30} /></DockTool>
          <DockTool><G n="collapse" s={30} /></DockTool>
          <DockTool><G n="starExp" s={30} /></DockTool>
          <SmallSep />
          <DockTool><G n="deselSm" s={30} /></DockTool>
          <SmallSep />
          <DockTool><G n="copyOff" s={28} off /></DockTool>
          <DockTool><G n="print" s={28} off /></DockTool>
          <SmallSep />
          <DockTool><G n="idMode" s={30} /></DockTool>
          <DropTri $w={20} />
          <DockTool><G n="wrench" s={30} /></DockTool>
          <SmallSep />
          <MoreBtn>»</MoreBtn>
        </DockTools>
        <IdTable>
          <IdHeader><IdCol $w={250}>Feature</IdCol><IdCol>Value</IdCol></IdHeader>
        </IdTable>
        <ModeRow $h={44} $mt={5}>
          <ModeLabel $w={66}>Mode</ModeLabel>
          <ModeCombo $w={403}>Top Down<Tri /></ModeCombo>
        </ModeRow>
        <ModeRow $h={38}>
          <ModeLabel $w={56} $off>View</ModeLabel>
          <ModeCombo $w={127} $off>Tree<Tri $c="#aaa" /></ModeCombo>
        </ModeRow>
      </RightDock>
    </Main>
    <StatusBar>
      <Locator><G n="search" s={18} />Type to locate (Ctrl+K)</Locator>
      <SLabel $w={128}>Coordinate</SLabel>
      <SField $w={239}>29.7513°,-89.3896°</SField>
      <SIcon $w={42}><G n="mouse" s={28} /></SIcon>
      <SLabel $w={63}>Scale</SLabel>
      <SField $w={165}>1:121121<SBtn $w={30}><Tri /></SBtn></SField>
      <SIcon $w={43}><G n="lock" s={28} /></SIcon>
      <SLabel $w={108}>Magnifier</SLabel>
      <SField $w={138}>100%<SBtn $w={20}><Tri $up $s={5} /><Tri $s={5} /></SBtn></SField>
      <SLabel $w={96} $ml={11}>Rotation</SLabel>
      <SField $w={130} $ml={9}>0.0 °<SBtn $w={20}><Tri $up $s={5} /><Tri $s={5} /></SBtn></SField>
      <StatusCheck><CheckMark /></StatusCheck>
      <SLabel $w={82}>Render</SLabel>
      <SIcon $w={30} $ml={12}><G n="crs" s={24} /></SIcon>
      <SLabel $w={123} $ml={2}>EPSG:4326</SLabel>
      <SIcon $w={40} $ml={15}><G n="msg" s={28} /></SIcon>
    </StatusBar>
    <Strip />
    <Dialog>
      <DlgTitle>
        <G n="qgisLogo" s={22} w={18} />
        Buffer
        <DlgClose width="18" height="18" viewBox="0 0 18 18"><path d="M2 2L16 16M16 2L2 16" stroke="#333" strokeWidth="1.3" /></DlgClose>
      </DlgTitle>
      <DlgBody>
        <DlgCols>
          <ParamCol>
            <Tabs>
              <Tab $w={171} $on>Parameters</Tab>
              <Tab $w={78}>Log</Tab>
            </Tabs>
            <Pane>
              <Label $mt={17}>Input layer</Label>
              <Line $mt={10}>
                <Marker $l={-14} $t={-2} $w={449} $h={44} />
                <Combo $w={944}>
                  <OverText>
                    <svg width="22" height="24" viewBox="0 0 22 24"><circle cx="4" cy="14" r="2" fill="#b5a030" /><circle cx="12" cy="5" r="2" fill="#b5a030" /><circle cx="4" cy="22" r="2" fill="#b5a030" /></svg>
                    Snapped geometry [EPSG:4326]
                  </OverText>
                  <Tri $s={5} />
                </Combo>
                <SideIcon $l={12}><G n="green" s={46} w={50} /></SideIcon>
                <SideIcon $l={26}><G n="wrench" s={52} /></SideIcon>
                <DotBtn>...<DotCaret><Tri $s={5} /></DotCaret></DotBtn>
              </Line>
              <Label $mt={29} $off>
                <CheckBox $off><span /></CheckBox>
                Selected features only
              </Label>
              <Label $mt={15}>Distance</Label>
              <Line $mt={18} $h={41}>
                <Marker $l={-6} $t={-3} $w={135} $h={47} />
                <Input $w={913}>
                  <OverText>0.000001</OverText>
                  <ClearBtn $mr={14} width="20" height="16" viewBox="0 0 22 16"><path d="M6 0H22V16H6L0 8Z" fill="#aaa" /><path d="M10 4L17 12M17 4L10 12" stroke="#fff" strokeWidth="2" /></ClearBtn>
                  <Spin $flush><Tri $up $s={5} /><Tri $s={5} /></Spin>
                </Input>
                <Deg>degrees</Deg>
                <SideIcon $l={14}><G n="warn" s={28} w={24} /></SideIcon>
                <SideIcon $l={16}><G n="dd" s={38} /></SideIcon>
                <DdCaret><Tri $s={5} /></DdCaret>
              </Line>
              <Label $mt={20}>Segments</Label>
              <Line $mt={11} $h={41}>
                <Input>5<Spin><Tri $up $s={5} /><Tri $s={5} /></Spin></Input>
              </Line>
              <Label $mt={14}>End cap style</Label>
              <Line $mt={9}><Combo>Round<Tri $s={5} /></Combo></Line>
              <Label $mt={11}>Join style</Label>
              <Line $mt={11}><Combo>Round<Tri $s={5} /></Combo></Line>
              <Label $mt={12}>Miter limit</Label>
              <Line $mt={11} $h={41}>
                <Input>2.000000<Spin><Tri $up $s={5} /><Tri $s={5} /></Spin></Input>
              </Line>
              <Label $mt={16}>
                <CheckBox><span /></CheckBox>
                Dissolve result
              </Label>
              <Label $mt={15}>Buffered</Label>
              <Line $mt={11} $h={39}>
                <Input $w={1085} $ph>[Create temporary layer]</Input>
                <DotBtn>...<DotCaret><Tri $s={5} /></DotCaret></DotBtn>
              </Line>
              <Label $mt={15} $ls={.6}>
                <CheckBox><CheckMark /></CheckBox>
                Open output file after running algorithm
              </Label>
            </Pane>
          </ParamCol>
          <Splitter><Caret /></Splitter>
          <HelpPane>
            <HelpTitle>Buffer</HelpTitle>
            <HelpP>This algorithm computes a buffer area for all the features in an input layer, using a fixed or dynamic distance.</HelpP>
            <HelpP>The segments parameter controls the number of line segments to use to approximate a quarter circle when creating rounded offsets.</HelpP>
            <HelpP>The end cap style parameter controls how line endings are handled in the buffer.</HelpP>
            <HelpP>The join style parameter specifies whether round, miter or beveled joins should be used when offsetting corners in a line.</HelpP>
            <HelpP>The miter limit parameter is only applicable for miter join styles, and controls the maximum distance from the offset curve to use when creating a mitered join.</HelpP>
          </HelpPane>
        </DlgCols>
        <ProgRow>
          <Progress>0%</Progress>
          <CancelTxt>Cancel</CancelTxt>
        </ProgRow>
        <BtnRow>
          <DBtn $w={142}>Advanced<Tri $s={4} /></DBtn>
          <DBtn $w={285} $ml={10}>Run as Batch Process...</DBtn>
          <DBtn $w={77} $ml={1066}>Run</DBtn>
          <DBtn $w={74} $ml={14} $focus>Close</DBtn>
          <DBtn $w={76} $ml={14}>Help</DBtn>
        </BtnRow>
      </DlgBody>
    </Dialog>
  </Root>
);

export default App;
